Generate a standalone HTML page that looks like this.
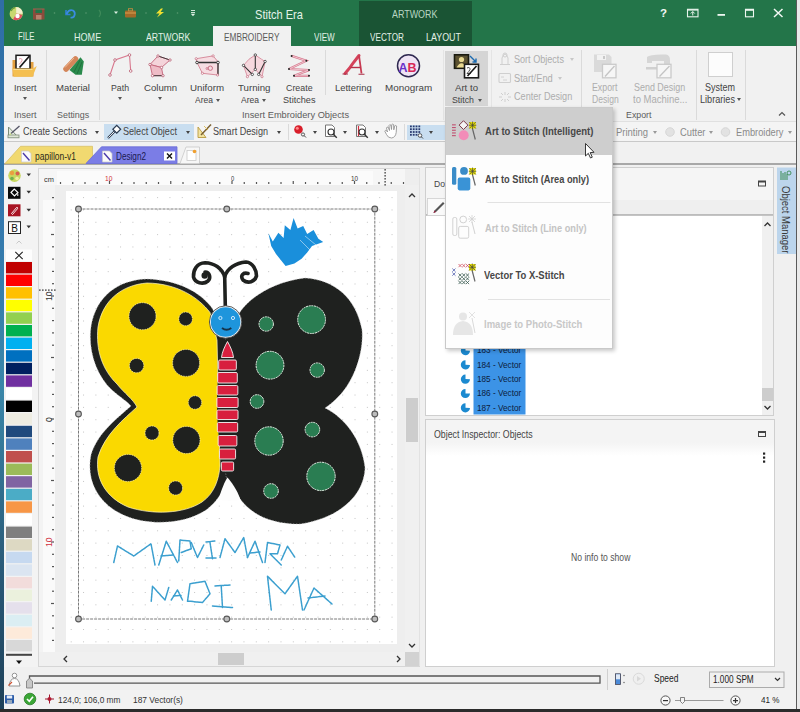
<!DOCTYPE html>
<html><head><meta charset="utf-8">
<style>
*{margin:0;padding:0;box-sizing:border-box}
html,body{width:800px;height:712px;overflow:hidden;background:#f0f0f0;font-family:"Liberation Sans",sans-serif;color:#444}
.a{position:absolute}
.t{position:absolute;white-space:nowrap;line-height:1}
.arr{position:absolute;width:0;height:0;border-left:2.5px solid transparent;border-right:2.5px solid transparent;border-top:3px solid #555}
svg{position:absolute;overflow:visible}
</style></head><body>
<div class="a" style="left:0px;top:0px;width:4px;height:712px;background:linear-gradient(#2f6ea6,#3478ae 30%,#3a86a8 55%,#2a5a78 80%,#1e4058);"></div>
<div class="a" style="left:797px;top:0px;width:3px;height:712px;background:#eaeaea;"></div>
<div class="a" style="left:796px;top:0px;width:1px;height:712px;background:#5a5a5a;"></div>
<div class="a" style="left:0px;top:709px;width:800px;height:3px;background:#2b2b2b;"></div>
<div class="a" style="left:4px;top:0px;width:792px;height:46px;background:#237549;"></div>
<div class="a" style="left:359px;top:1px;width:113px;height:45px;background:#1a5434;"></div>
<div class="t" style="left:254.50px;top:8.00px;font-size:13.41px;color:#e6f3ea;transform:scaleX(0.8250);transform-origin:0 0;">Stitch Era</div>
<div class="t" style="left:392.00px;top:9.00px;font-size:10.87px;color:#b9d6c3;transform:scaleX(0.8216);transform-origin:0 0;">ARTWORK</div>
<div class="t" style="left:17.50px;top:32.00px;font-size:10.14px;color:#e2f1e7;transform:scaleX(0.7708);transform-origin:0 0;">FILE</div>
<div class="t" style="left:73.75px;top:33.00px;font-size:10.14px;color:#e2f1e7;transform:scaleX(0.8954);transform-origin:0 0;">HOME</div>
<div class="t" style="left:146.00px;top:33.00px;font-size:10.14px;color:#e2f1e7;transform:scaleX(0.8609);transform-origin:0 0;">ARTWORK</div>
<div class="a" style="left:213px;top:26px;width:78px;height:20px;background:#f1f1f1;"></div>
<div class="t" style="left:224.00px;top:33.00px;font-size:10.14px;color:#5a5a5a;transform:scaleX(0.8159);transform-origin:0 0;">EMBROIDERY</div>
<div class="t" style="left:313.75px;top:33.00px;font-size:10.14px;color:#e2f1e7;transform:scaleX(0.8005);transform-origin:0 0;">VIEW</div>
<div class="t" style="left:370.00px;top:33.00px;font-size:10.14px;color:#e2f1e7;transform:scaleX(0.8076);transform-origin:0 0;">VECTOR</div>
<div class="t" style="left:425.75px;top:33.00px;font-size:10.14px;color:#e2f1e7;transform:scaleX(0.8790);transform-origin:0 0;">LAYOUT</div>
<div class="a" style="left:4px;top:46px;width:792px;height:76px;background:#f1f1f1;"></div>
<div class="a" style="left:4px;top:121px;width:792px;height:1px;background:#e0e0e0;"></div>
<div class="t" style="left:13.50px;top:84.00px;font-size:9.28px;color:#444444;transform:scaleX(0.9703);transform-origin:0 0;">Insert</div>
<div class="arr" style="left:22.5px;top:96.5px;border-left-width:2.5px;border-right-width:2.5px;border-top-color:#555"></div>
<div class="t" style="left:13.50px;top:110.00px;font-size:9.42px;color:#5c5c5c;transform:scaleX(0.9554);transform-origin:0 0;">Insert</div>
<div class="a" style="left:46px;top:50px;width:1px;height:70px;background:#dadada;"></div>
<div class="t" style="left:56.00px;top:84.00px;font-size:9.28px;color:#444444;transform:scaleX(1.0311);transform-origin:0 0;">Material</div>
<div class="t" style="left:56.70px;top:110.00px;font-size:9.42px;color:#5c5c5c;transform:scaleX(0.9485);transform-origin:0 0;">Settings</div>
<div class="a" style="left:99px;top:50px;width:1px;height:70px;background:#dadada;"></div>
<div class="t" style="left:111.00px;top:84.00px;font-size:9.28px;color:#444444;transform:scaleX(0.9443);transform-origin:0 0;">Path</div>
<div class="arr" style="left:117.5px;top:96.5px;border-left-width:2.5px;border-right-width:2.5px;border-top-color:#555"></div>
<div class="t" style="left:143.80px;top:84.00px;font-size:9.28px;color:#444444;transform:scaleX(1.0390);transform-origin:0 0;">Column</div>
<div class="arr" style="left:157.5px;top:96.5px;border-left-width:2.5px;border-right-width:2.5px;border-top-color:#555"></div>
<div class="t" style="left:190.40px;top:84.00px;font-size:9.28px;color:#444444;transform:scaleX(1.0504);transform-origin:0 0;">Uniform</div>
<div class="t" style="left:194.60px;top:95.00px;font-size:9.57px;color:#444444;transform:scaleX(0.8848);transform-origin:0 0;">Area</div>
<div class="arr" style="left:215.5px;top:98.5px;border-left-width:2.5px;border-right-width:2.5px;border-top-color:#555"></div>
<div class="t" style="left:237.80px;top:84.00px;font-size:9.28px;color:#444444;transform:scaleX(1.0444);transform-origin:0 0;">Turning</div>
<div class="t" style="left:241.00px;top:95.00px;font-size:9.57px;color:#444444;transform:scaleX(0.8897);transform-origin:0 0;">Area</div>
<div class="arr" style="left:262.0px;top:98.5px;border-left-width:2.5px;border-right-width:2.5px;border-top-color:#555"></div>
<div class="t" style="left:286.00px;top:84.00px;font-size:9.28px;color:#444444;transform:scaleX(0.9559);transform-origin:0 0;">Create</div>
<div class="t" style="left:283.30px;top:95.00px;font-size:9.57px;color:#444444;transform:scaleX(0.9558);transform-origin:0 0;">Stitches</div>
<div class="t" style="left:242.40px;top:110.00px;font-size:9.42px;color:#5c5c5c;transform:scaleX(0.9844);transform-origin:0 0;">Insert Embroidery Objects</div>
<div class="a" style="left:324.6px;top:50px;width:1px;height:45px;background:#dadada;"></div>
<div class="t" style="left:335.00px;top:84.00px;font-size:9.28px;color:#444444;transform:scaleX(1.0172);transform-origin:0 0;">Lettering</div>
<div class="t" style="left:384.70px;top:84.00px;font-size:9.28px;color:#444444;transform:scaleX(1.0646);transform-origin:0 0;">Monogram</div>
<div class="a" style="left:443px;top:50px;width:1px;height:70px;background:#e4e4e4;"></div>
<div class="a" style="left:445px;top:51px;width:43px;height:55px;background:#d5d5d5;"></div>
<div class="t" style="left:454.70px;top:83.00px;font-size:9.71px;color:#444444;transform:scaleX(0.9911);transform-origin:0 0;">Art to</div>
<div class="t" style="left:452.00px;top:95.00px;font-size:9.86px;color:#444444;transform:scaleX(0.8929);transform-origin:0 0;">Stitch</div>
<div class="arr" style="left:477.5px;top:98.5px;border-left-width:2.5px;border-right-width:2.5px;border-top-color:#555"></div>
<div class="a" style="left:491px;top:50px;width:1px;height:70px;background:#e4e4e4;"></div>
<div class="t" style="left:513.75px;top:55.00px;font-size:10.14px;color:#adadad;transform:scaleX(0.8961);transform-origin:0 0;">Sort Objects</div>
<div class="arr" style="left:570.0px;top:57.5px;border-left-width:2.5px;border-right-width:2.5px;border-top-color:#c8c8c8"></div>
<div class="t" style="left:513.75px;top:73.00px;font-size:10.51px;color:#adadad;transform:scaleX(0.8844);transform-origin:0 0;">Start/End</div>
<div class="arr" style="left:557.5px;top:76.5px;border-left-width:2.5px;border-right-width:2.5px;border-top-color:#c8c8c8"></div>
<div class="t" style="left:513.75px;top:91.00px;font-size:10.58px;color:#adadad;transform:scaleX(0.8616);transform-origin:0 0;">Center Design</div>
<div class="a" style="left:581px;top:50px;width:1px;height:70px;background:#dadada;"></div>
<div class="t" style="left:592.00px;top:83.00px;font-size:10.14px;color:#adadad;transform:scaleX(0.8697);transform-origin:0 0;">Export</div>
<div class="t" style="left:592.00px;top:95.00px;font-size:10.14px;color:#adadad;transform:scaleX(0.8465);transform-origin:0 0;">Design</div>
<div class="t" style="left:633.75px;top:83.00px;font-size:10.14px;color:#adadad;transform:scaleX(0.8824);transform-origin:0 0;">Send Design</div>
<div class="t" style="left:632.50px;top:95.00px;font-size:10.14px;color:#adadad;transform:scaleX(0.9384);transform-origin:0 0;">to Machine...</div>
<div class="t" style="left:626.25px;top:110.00px;font-size:9.42px;color:#5c5c5c;transform:scaleX(0.9367);transform-origin:0 0;">Export</div>
<div class="a" style="left:696px;top:50px;width:1px;height:70px;background:#dadada;"></div>
<div class="a" style="left:708px;top:52px;width:25px;height:25px;background:#fcfcfc;border:1px solid #cfcfcf"></div>
<div class="t" style="left:705.00px;top:82.00px;font-size:11.30px;color:#444444;transform:scaleX(0.7958);transform-origin:0 0;">System</div>
<div class="t" style="left:700.00px;top:94.00px;font-size:10.87px;color:#444444;transform:scaleX(0.8396);transform-origin:0 0;">Libraries</div>
<div class="arr" style="left:736.5px;top:97.5px;border-left-width:2.5px;border-right-width:2.5px;border-top-color:#555"></div>
<div class="a" style="left:745px;top:50px;width:1px;height:70px;background:#dadada;"></div>
<svg class="a" style="left:0;top:0" width="800" height="712" viewBox="0 0 800 712"><circle cx="16.2" cy="13.7" r="6.6" fill="#c8d870"/><path d="M16.2 7.1 A6.6 6.6 0 0 1 22.8 13.7 L16.2 13.7 Z" fill="#f4f0d0"/><path d="M16.5 13.5 L22.5 15 A6.6 6.6 0 0 1 13 19.5 Z" fill="#e05060"/><circle cx="17.5" cy="16" r="2.2" fill="#fff"/><path d="M11 11 A6 6 0 0 1 15 7.5" stroke="#6aa040" stroke-width="1.5" fill="none"/><path d="M33 9 L33 19.5 L44.5 19.5 L44.5 9 L42 9 L42 13 L35.5 13 L35.5 9 Z" fill="#8a4c3c"/><rect x="36" y="15" width="5.5" height="4.5" fill="#b9826e"/><path d="M33 9 L44.5 9" stroke="#a76050" stroke-width="1"/><path d="M66 10 L66 14.5 L70.5 14.5" fill="none" stroke="#2f7fd6" stroke-width="1.6"/><path d="M66.5 14 Q69 9 73 10.5 Q76 12.5 74 16.5 Q72.5 18 70.5 17.5" fill="none" stroke="#3a8ce0" stroke-width="1.8"/><circle cx="54.5" cy="13" r="0.8" fill="#5a9a70"/><circle cx="86" cy="13" r="0.8" fill="#5a9a70"/><circle cx="146" cy="13" r="0.8" fill="#5a9a70"/><circle cx="177.5" cy="13" r="0.8" fill="#5a9a70"/><path d="M99 10 Q102 13 99 17" fill="none" stroke="#3f8a5a" stroke-width="1.2"/><path d="M114 11.5 L118 11.5 L116 14 Z" fill="#dff0e4"/><rect x="125" y="10.5" width="11" height="7" rx="1" fill="#a36a28"/><rect x="128.5" y="8.7" width="4" height="2.2" fill="none" stroke="#c08a40" stroke-width="0.9"/><rect x="125" y="12.5" width="11" height="1" fill="#d9a050"/><path d="M161 8.5 L156 13.5 L159.5 13.5 L157 17.5 L164 12 L160.5 12 L163 8.5 Z" fill="#f2e030"/><path d="M191 10.5 L195 10.5 M191 12.5 L195 12.5" stroke="#e0f0e6" stroke-width="0.9"/><path d="M190.8 13.8 L195.2 13.8 L193 16.3 Z" fill="#e0f0e6"/><text x="660" y="17.3" font-family="Liberation Sans" font-weight="bold" font-size="11.5" fill="#f2f8f4">?</text><rect x="687.5" y="9.3" width="10.5" height="7.5" fill="none" stroke="#e8f4ec" stroke-width="1.1"/><rect x="687.5" y="9.3" width="10.5" height="1.3" fill="#e8f4ec"/><path d="M692.75 15.5 L692.75 11.8 M690.8 13.5 L692.75 11.5 L694.7 13.5" fill="none" stroke="#e8f4ec" stroke-width="1"/><rect x="717.5" y="14" width="7.5" height="1.8" fill="#eef7f1"/><rect x="745.5" y="9.3" width="8" height="7.5" fill="none" stroke="#eef7f1" stroke-width="1.1"/><rect x="745.5" y="9" width="8" height="1.8" fill="#eef7f1"/><path d="M774 9 L782.5 17 M782.5 9 L774 17" stroke="#f2f8f4" stroke-width="1.5"/><path d="M12.5 60 L20 60 L22 62 L33.5 62 L33.5 76.5 L12.5 76.5 Z" fill="#e3a040"/><rect x="16" y="55.3" width="14" height="13.7" fill="#fff" stroke="#1a1a1a" stroke-width="1.5"/><path d="M19 59 q3 -1.5 3 1.5 q-1 2 -3 4" fill="none" stroke="#e89aa8" stroke-width="1"/><path d="M29.5 56 L19.5 67.5" stroke="#1a1a1a" stroke-width="1.8"/><path d="M12.3 68.5 L33 68.5 L36.8 66 L32.5 76.8 L13.8 76.8 Z" fill="#f4bf50"/><path d="M13.5 69.5 L32.5 69.5" stroke="#f9dc90" stroke-width="1"/><path d="M66 69 L75.5 59" stroke="#d4865a" stroke-width="5.5" stroke-linecap="round"/><path d="M65 67.5 L74 58" stroke="#f0b890" stroke-width="1"/><path d="M69.5 70 L80.5 57.3 L83.8 61.5 L81.8 74.8 L75.5 74.8 Z" fill="#2a8a4c"/><path d="M74 72 L80 60 M77 74 L82 62" stroke="#1d6b3a" stroke-width="0.8"/><polyline points="110,75 115,60 129.5,55 130.7,71" fill="none" stroke="#d8788e" stroke-width="1.1"/><circle cx="110" cy="75" r="1.3" fill="#fff" stroke="#b85c70" stroke-width="0.8"/><circle cx="115" cy="60" r="1.3" fill="#fff" stroke="#b85c70" stroke-width="0.8"/><circle cx="129.5" cy="55" r="1.3" fill="#fff" stroke="#b85c70" stroke-width="0.8"/><circle cx="130.7" cy="71" r="1.3" fill="#fff" stroke="#b85c70" stroke-width="0.8"/><path d="M158 56 L170 60 L161.5 67.5 L150 64.5 Z" fill="#f4d4da" stroke="#c4647a" stroke-width="0.9"/><path d="M150 64.5 L161.5 67.5 L163 75.7 L152.5 75.7 Z" fill="#eebcc6" stroke="#c4647a" stroke-width="0.9"/><path d="M158 56 L170 60 M152.5 75.7 L163 75.7" stroke="#333" stroke-width="0.9"/><circle cx="158" cy="56" r="1.2" fill="#fff" stroke="#b85c70" stroke-width="0.8"/><circle cx="170" cy="60" r="1.2" fill="#fff" stroke="#b85c70" stroke-width="0.8"/><circle cx="161.5" cy="67.5" r="1.2" fill="#fff" stroke="#b85c70" stroke-width="0.8"/><circle cx="150" cy="64.5" r="1.2" fill="#fff" stroke="#b85c70" stroke-width="0.8"/><circle cx="152.5" cy="75.7" r="1.2" fill="#fff" stroke="#b85c70" stroke-width="0.8"/><circle cx="163" cy="75.7" r="1.2" fill="#fff" stroke="#b85c70" stroke-width="0.8"/><path d="M196.2 58.7 L213.1 55.9 L218.2 62 L217.6 75 L202.4 73.3 L196.8 62 Z" fill="#f6dde2" stroke="#d48294" stroke-width="0.9"/><path d="M197 62.5 L218 62.5 L218 75" fill="none" stroke="#333" stroke-width="1.3"/><circle cx="210.3" cy="68.2" r="2.2" fill="none" stroke="#c4647a" stroke-width="0.9"/><circle cx="207" cy="68.5" r="1" fill="none" stroke="#c4647a" stroke-width="0.7"/><circle cx="197" cy="62.5" r="1.3" fill="#fff" stroke="#333" stroke-width="0.9"/><circle cx="218" cy="62.5" r="1.3" fill="#fff" stroke="#333" stroke-width="0.9"/><circle cx="196.2" cy="58.7" r="1.1" fill="#fff" stroke="#c4647a" stroke-width="0.7"/><circle cx="213.1" cy="55.9" r="1.1" fill="#fff" stroke="#c4647a" stroke-width="0.7"/><circle cx="217.6" cy="75" r="1.1" fill="#fff" stroke="#c4647a" stroke-width="0.7"/><circle cx="202.4" cy="73.3" r="1.1" fill="#fff" stroke="#c4647a" stroke-width="0.7"/><path d="M249 59.2 L255.3 55 L261.5 59.2 L265.1 61.5 L262 76.7 L255.3 69.4 L247.4 76.7 L243.5 65.4 Z" fill="#f6d8de" stroke="#d48294" stroke-width="0.8"/><path d="M255.3 55 L255.3 69.4 M243.5 65.4 L252.3 74.4 M265.1 61.5 L258.7 74.4" stroke="#333" stroke-width="1.1"/><circle cx="255.3" cy="55" r="1.2" fill="#fff" stroke="#333" stroke-width="0.8"/><circle cx="243.5" cy="65.4" r="1.2" fill="#fff" stroke="#333" stroke-width="0.8"/><circle cx="252.3" cy="74.4" r="1.2" fill="#fff" stroke="#333" stroke-width="0.8"/><circle cx="255.3" cy="69.4" r="1.2" fill="#fff" stroke="#333" stroke-width="0.8"/><circle cx="258.7" cy="74.4" r="1.2" fill="#fff" stroke="#333" stroke-width="0.8"/><circle cx="265.1" cy="61.5" r="1.2" fill="#fff" stroke="#333" stroke-width="0.8"/><circle cx="247.4" cy="76.7" r="1.1" fill="#fff" stroke="#c4647a" stroke-width="0.7"/><circle cx="262" cy="76.7" r="1.1" fill="#fff" stroke="#c4647a" stroke-width="0.7"/><polyline points="291.6,55.9 306.3,60.8 289,69 309,70.1 294,75.8 309,75.8" fill="none" stroke="#d8788e" stroke-width="2.2"/><polyline points="291.6,55.9 306.3,60.8 289,69 309,70.1 294,75.8 309,75.8" fill="none" stroke="#f7e4e8" stroke-width="0.7"/><circle cx="291.6" cy="55.9" r="1" fill="#222"/><circle cx="306.3" cy="60.8" r="1" fill="#222"/><circle cx="289" cy="69" r="1" fill="#222"/><circle cx="309" cy="70.1" r="1" fill="#222"/><circle cx="294" cy="75.8" r="1" fill="#222"/><circle cx="309" cy="75.8" r="1" fill="#222"/><path d="M345 73.5 Q350 68 353.5 62.5 L359 55.5" fill="none" stroke="#d4425a" stroke-width="3" stroke-linecap="round"/><path d="M359 55.5 L361.5 73.5" fill="none" stroke="#c83a52" stroke-width="1.8"/><path d="M342.5 74 L348 74 M358.5 74.2 L364.5 74.2" stroke="#a83048" stroke-width="1.1"/><path d="M350.5 67.5 L360.5 67.5" stroke="#b83048" stroke-width="1.4"/><circle cx="408.5" cy="65.8" r="11" fill="#eee4f4" stroke="#2e2850" stroke-width="1.5"/><text x="398.6" y="72" font-family="Liberation Sans" font-weight="bold" font-size="12.5" fill="#6a30c8" transform="scale(1 1)">A</text><text x="407.4" y="72" font-family="Liberation Sans" font-weight="bold" font-size="12.5" fill="#d82858">B</text><rect x="454.5" y="54.8" width="14" height="13.5" fill="#5a5030" stroke="#1a1a10" stroke-width="1.6"/><circle cx="461.5" cy="59.5" r="2.6" fill="#e8d890"/><path d="M456.5 67.5 Q461.5 59 466.5 67.5 Z" fill="#e8d890"/><path d="M470 56 L476 62 M476 58.5 L476 62 L472.5 62" fill="none" stroke="#1a6ab0" stroke-width="1.4"/><rect x="464.5" y="64.3" width="14" height="13.5" fill="#fff" stroke="#1a1a1a" stroke-width="1.6"/><path d="M476.5 66 L467.5 76" stroke="#1a1a1a" stroke-width="1.6"/><path d="M467 68 q3 -1.5 3 1.5 q-1 2 -3 4 l4 0" fill="none" stroke="#222" stroke-width="0.8"/><path d="M502 64 L502 58 Q505 50 508 58 L508 64 M500 64.5 L510 64.5" fill="none" stroke="#cfcfcf" stroke-width="1"/><circle cx="505" cy="55" r="2" fill="none" stroke="#cfcfcf" stroke-width="1"/><rect x="499" y="73.5" width="11.5" height="9" rx="1" fill="none" stroke="#cfcfcf" stroke-width="1.1"/><path d="M501 77 L504 77 M503 80 L507 80" stroke="#cfcfcf" stroke-width="0.9"/><path d="M505 92 L505 95 M505 99 L505 102 M499 97 L502 97 M508 97 L511 97 M501 93 L503 95 M507 99 L509 101 M501 101 L503 99 M507 95 L509 93" stroke="#cfcfcf" stroke-width="1"/><path d="M594 54.5 L609 54.5 L611.5 57 L611.5 72 L594 72 Z" fill="#dadada"/><rect x="597" y="55" width="9" height="5" fill="#f2f2f2"/><rect x="603" y="56" width="2" height="3" fill="#c8c8c8"/><rect x="602.5" y="64.3" width="13.5" height="13.5" fill="#f6f6f6" stroke="#cacaca" stroke-width="1.3"/><path d="M614.5 66 L605 76.5" stroke="#c4c4c4" stroke-width="1.3"/><path d="M647 57 Q650 54 666 54.5 Q670 55 670 60 L670 68 L664 68 L664 61 L652 61 L652 63 L647 63 Z" fill="#d6d6d6"/><rect x="646" y="67" width="14" height="2.5" fill="#d0d0d0"/><rect x="657" y="64.3" width="14" height="13.5" fill="#f6f6f6" stroke="#cacaca" stroke-width="1.3"/><path d="M669.5 66 L659.5 76.5" stroke="#c4c4c4" stroke-width="1.3"/><path d="M779 115.5 L782 112.5 L785 115.5" fill="none" stroke="#555" stroke-width="1.2"/></svg>
<div class="a" style="left:4px;top:122px;width:792px;height:19px;background:#f4f4f4;"></div>
<div class="a" style="left:4px;top:141px;width:792px;height:1px;background:#c9c9c9;"></div>
<div class="t" style="left:23.00px;top:127.00px;font-size:10.43px;color:#444444;transform:scaleX(0.8620);transform-origin:0 0;">Create Sections</div>
<div class="arr" style="left:95.0px;top:130.5px;border-left-width:2.5px;border-right-width:2.5px;border-top-color:#444"></div>
<div class="a" style="left:104px;top:124px;width:90px;height:16px;background:#c9def0;"></div>
<div class="t" style="left:123.00px;top:127.00px;font-size:10.43px;color:#444444;transform:scaleX(0.8705);transform-origin:0 0;">Select Object</div>
<div class="arr" style="left:185.5px;top:130.5px;border-left-width:2.5px;border-right-width:2.5px;border-top-color:#444"></div>
<div class="t" style="left:213.00px;top:127.00px;font-size:10.00px;color:#444444;transform:scaleX(0.9076);transform-origin:0 0;">Smart Design</div>
<div class="arr" style="left:276.5px;top:130.5px;border-left-width:2.5px;border-right-width:2.5px;border-top-color:#444"></div>
<div class="a" style="left:287.5px;top:124px;width:1px;height:16px;background:#dadada;"></div>
<div class="arr" style="left:312.5px;top:130.5px;border-left-width:2.5px;border-right-width:2.5px;border-top-color:#444"></div>
<div class="arr" style="left:343.0px;top:130.5px;border-left-width:2.5px;border-right-width:2.5px;border-top-color:#444"></div>
<div class="arr" style="left:374.5px;top:130.5px;border-left-width:2.5px;border-right-width:2.5px;border-top-color:#444"></div>
<div class="a" style="left:404px;top:124px;width:1px;height:16px;background:#dadada;"></div>
<div class="a" style="left:407px;top:124.5px;width:38px;height:15.5px;background:#c9def0;"></div>
<div class="arr" style="left:428.5px;top:130.5px;border-left-width:2.5px;border-right-width:2.5px;border-top-color:#444"></div>
<div class="t" style="left:616.00px;top:127.00px;font-size:10.58px;color:#8a8a8a;transform:scaleX(0.8922);transform-origin:0 0;">Printing</div>
<div class="arr" style="left:653.0px;top:130.5px;border-left-width:2.5px;border-right-width:2.5px;border-top-color:#999"></div>
<div class="t" style="left:679.50px;top:127.00px;font-size:10.58px;color:#8a8a8a;transform:scaleX(0.8845);transform-origin:0 0;">Cutter</div>
<div class="arr" style="left:709.25px;top:130.5px;border-left-width:2.5px;border-right-width:2.5px;border-top-color:#999"></div>
<div class="t" style="left:735.50px;top:127.00px;font-size:10.58px;color:#8a8a8a;transform:scaleX(0.8778);transform-origin:0 0;">Embroidery</div>
<div class="arr" style="left:787.5px;top:130.5px;border-left-width:2.5px;border-right-width:2.5px;border-top-color:#999"></div>
<div class="a" style="left:4px;top:142px;width:792px;height:23px;background:#f1f1f1;"></div>
<div class="a" style="left:4px;top:163px;width:792px;height:1.5px;background:#a8a8a8;"></div>
<svg class="a" style="left:0;top:0" width="800" height="712" viewBox="0 0 800 712"><path d="M8.5 127 L8.5 137 L18 137 Z" fill="#e4ebe0" stroke="#7d8c78" stroke-width="1"/><rect x="8" y="135" width="11" height="2.8" fill="#dfe7d6" stroke="#7d8c78" stroke-width="0.8"/><path d="M11 133.5 L19.5 126" stroke="#556" stroke-width="1.3"/><path d="M11 133.5 L10 135" stroke="#c9e080" stroke-width="1.2"/><path d="M108 138 L115 131" stroke="#2a3a50" stroke-width="2.3"/><path d="M108.3 137.7 L114.7 131.3" stroke="#fff" stroke-width="0.9"/><rect x="114" y="126.5" width="5.5" height="5.5" fill="#fff" stroke="#2a3a50" stroke-width="1.2" transform="rotate(45 116.75 129.25)"/><path d="M198 127 L198 137.5 L206 137.5 Z" fill="#f3e3a0" stroke="#b89a40" stroke-width="0.9"/><path d="M201 135 L211 124.5" stroke="#7a6030" stroke-width="1.5"/><path d="M204 126 L208 130" stroke="#e0c060" stroke-width="1"/><circle cx="298.5" cy="129.5" r="4.3" fill="#d81e2a"/><circle cx="297.3" cy="128.2" r="1.5" fill="#f88"/><circle cx="303" cy="134.5" r="1.6" fill="none" stroke="#333" stroke-width="0.8"/><path d="M304.2 135.7 L306 137.5" stroke="#333" stroke-width="0.9"/><path d="M325.5 125 L332 125 L334.5 127.5 L334.5 136.5 L325.5 136.5 Z" fill="#fff" stroke="#777" stroke-width="1"/><circle cx="331" cy="132" r="3" fill="#fff" stroke="#333" stroke-width="1.1"/><path d="M333.2 134.2 L336.8 137.8" stroke="#333" stroke-width="1.4"/><path d="M356.5 125 L363 125 L365.5 127.5 L365.5 136.5 L356.5 136.5 Z" fill="#fff" stroke="#777" stroke-width="1"/><path d="M358.5 126 L358.5 136" stroke="#d03040" stroke-width="1.2"/><circle cx="362" cy="132" r="3" fill="#fff" stroke="#333" stroke-width="1.1"/><path d="M364.2 134.2 L367.8 137.8" stroke="#333" stroke-width="1.4"/><path d="M387.5 132 L386.5 128 Q386.8 126.6 388.2 127.2 L389.5 130.5 L389 125.5 Q389.5 124.2 390.8 125 L391.5 129.5 L391.8 124.6 Q392.6 123.6 393.6 124.6 L393.8 129.8 L394.8 125.8 Q395.8 125 396.6 126 L396.2 132.5 Q395.5 137.5 391.5 138 Q388 138 386.5 134.5 L384.8 131.2 Q385.2 129.8 386.6 130.6 Z" fill="#fff" stroke="#8a8a8a" stroke-width="0.8"/><rect x="410.0" y="125.5" width="1.8" height="1.8" fill="#2a3a70"/><rect x="410.0" y="128.3" width="1.8" height="1.8" fill="#2a3a70"/><rect x="410.0" y="131.1" width="1.8" height="1.8" fill="#2a3a70"/><rect x="410.0" y="133.9" width="1.8" height="1.8" fill="#2a3a70"/><rect x="412.8" y="125.5" width="1.8" height="1.8" fill="#2a3a70"/><rect x="412.8" y="128.3" width="1.8" height="1.8" fill="#2a3a70"/><rect x="412.8" y="131.1" width="1.8" height="1.8" fill="#2a3a70"/><rect x="412.8" y="133.9" width="1.8" height="1.8" fill="#2a3a70"/><rect x="415.6" y="125.5" width="1.8" height="1.8" fill="#2a3a70"/><rect x="415.6" y="128.3" width="1.8" height="1.8" fill="#2a3a70"/><rect x="415.6" y="131.1" width="1.8" height="1.8" fill="#2a3a70"/><rect x="415.6" y="133.9" width="1.8" height="1.8" fill="#2a3a70"/><rect x="418.4" y="125.5" width="1.8" height="1.8" fill="#2a3a70"/><rect x="418.4" y="128.3" width="1.8" height="1.8" fill="#2a3a70"/><rect x="418.4" y="131.1" width="1.8" height="1.8" fill="#2a3a70"/><circle cx="420" cy="135.5" r="1.8" fill="#fff" stroke="#333" stroke-width="0.8"/><path d="M421.3 136.8 L423 138.5" stroke="#333" stroke-width="0.9"/><circle cx="670" cy="132" r="4.3" fill="#e2e2e2" stroke="#d0d0d0" stroke-width="0.8"/><circle cx="725.5" cy="132" r="4.3" fill="#e2e2e2" stroke="#d0d0d0" stroke-width="0.8"/><path d="M5 163.5 L20.5 146.3 L92.5 146.3 L92.5 156 L86 163.5 Z" fill="#f1d970" stroke="#d9c267" stroke-width="0.8"/><path d="M86 163.5 L101.5 146.8 L177 146.8 L177 163.5 Z" fill="#7b7de6" stroke="#6a6cd8" stroke-width="0.8"/><path d="M21.5 151 L28.5 151 L31.0 153.5 L31.0 162 L21.5 162 Z" fill="#fbfbfb" stroke="#c9c9c9" stroke-width="0.7"/><path d="M23.0 153 L29.5 160.5" stroke="#4a3aa8" stroke-width="1.4"/><path d="M102.5 151 L109.5 151 L112.0 153.5 L112.0 162 L102.5 162 Z" fill="#fbfbfb" stroke="#c9c9c9" stroke-width="0.7"/><path d="M104.0 153 L110.5 160.5" stroke="#4a3aa8" stroke-width="1.4"/><rect x="164" y="151.5" width="11" height="9" fill="#fff"/><path d="M167 153.5 L172 158.5 M172 153.5 L167 158.5" stroke="#111" stroke-width="1.4"/><path d="M180 163.5 L186 147 L199.5 147 L199.5 163.5" fill="#f7f7f7" stroke="#c8c8c8" stroke-width="0.8"/><rect x="187" y="150.5" width="9" height="10" fill="#fff" stroke="#c9c9c9" stroke-width="0.8"/><circle cx="194.5" cy="151.5" r="1.8" fill="#f0a030"/></svg>
<div class="t" style="left:35.00px;top:151.00px;font-size:10.58px;color:#2a2a1a;transform:scaleX(0.8015);transform-origin:0 0;">papillon-v1</div>
<div class="t" style="left:116.00px;top:151.00px;font-size:10.58px;color:#1a1a50;transform:scaleX(0.7726);transform-origin:0 0;">Design2</div>
<div class="a" style="left:4px;top:165px;width:792px;height:544px;background:#f0f0f0;"></div>
<svg class="a" style="left:0;top:0" width="800" height="712" viewBox="0 0 800 712"><rect x="4" y="165" width="34" height="544" fill="#f3f3f3"/><circle cx="14.5" cy="175.6" r="6.3" fill="#c8d860"/><circle cx="12" cy="173" r="2.2" fill="#e9a040"/><circle cx="17.5" cy="173.5" r="2" fill="#d86050"/><circle cx="17" cy="178.5" r="1.8" fill="#f0f0a0"/><circle cx="12" cy="178.5" r="1.8" fill="#70b050"/><rect x="8" y="186.8" width="12.5" height="12" fill="#0a0a0a"/><path d="M11 192.5 L14.3 189 L18 192.5 L14.5 196 Z" fill="none" stroke="#fff" stroke-width="1.1"/><path d="M17.8 193.5 L17.8 196" stroke="#fff" stroke-width="1"/><rect x="8" y="204.3" width="12.5" height="12" fill="#a81423"/><path d="M11.5 213.5 L16.5 207.5 Q18 207 17.5 208.7 L12.5 214.5 Z" fill="none" stroke="#fff" stroke-width="0.9"/><rect x="8.5" y="221.7" width="12" height="11.8" fill="#fff" stroke="#222" stroke-width="1"/><text x="11.2" y="231.5" font-family="Liberation Sans" font-size="10" fill="#111">B</text><path d="M26.5 173.5 L31 173.5 L28.75 176.3 Z" fill="#333"/><path d="M26.5 190.7 L31 190.7 L28.75 193.5 Z" fill="#333"/><path d="M26.5 208.7 L31 208.7 L28.75 211.5 Z" fill="#333"/><path d="M26.5 225.5 L31 225.5 L28.75 228.3 Z" fill="#333"/><path d="M16.5 243.5 L19 241 L21.5 243.5" fill="none" stroke="#c8c8c8" stroke-width="1"/><rect x="6" y="249.5" width="26" height="11.5" fill="#fdfdfd"/><path d="M15.3 251.8 L22.7 259.2 M22.7 251.8 L15.3 259.2" stroke="#222" stroke-width="1.1"/><rect x="6" y="262.00" width="26" height="11.4" fill="#c00000"/><rect x="6" y="274.60" width="26" height="11.4" fill="#ff0000"/><rect x="6" y="287.20" width="26" height="11.4" fill="#ffc000"/><rect x="6" y="299.80" width="26" height="11.4" fill="#ffff00"/><rect x="6" y="312.40" width="26" height="11.4" fill="#92d050"/><rect x="6" y="325.00" width="26" height="11.4" fill="#00b050"/><rect x="6" y="337.60" width="26" height="11.4" fill="#00b0f0"/><rect x="6" y="350.20" width="26" height="11.4" fill="#0070c0"/><rect x="6" y="362.80" width="26" height="11.4" fill="#002060"/><rect x="6" y="375.40" width="26" height="11.4" fill="#7030a0"/><rect x="6" y="388.00" width="26" height="11.4" fill="#ffffff"/><rect x="6" y="400.60" width="26" height="11.4" fill="#000000"/><rect x="6" y="413.20" width="26" height="11.4" fill="#eeece1"/><rect x="6" y="425.80" width="26" height="11.4" fill="#1f497d"/><rect x="6" y="438.40" width="26" height="11.4" fill="#4f81bd"/><rect x="6" y="451.00" width="26" height="11.4" fill="#c0504d"/><rect x="6" y="463.60" width="26" height="11.4" fill="#9bbb59"/><rect x="6" y="476.20" width="26" height="11.4" fill="#8064a2"/><rect x="6" y="488.80" width="26" height="11.4" fill="#4bacc6"/><rect x="6" y="501.40" width="26" height="11.4" fill="#f79646"/><rect x="6" y="514.00" width="26" height="11.4" fill="#ffffff"/><rect x="6" y="526.60" width="26" height="11.4" fill="#7f7f7f"/><rect x="6" y="539.20" width="26" height="11.4" fill="#ddd9c3"/><rect x="6" y="551.80" width="26" height="11.4" fill="#c6d9f0"/><rect x="6" y="564.40" width="26" height="11.4" fill="#dbe5f1"/><rect x="6" y="577.00" width="26" height="11.4" fill="#f2dcdb"/><rect x="6" y="589.60" width="26" height="11.4" fill="#ebf1dd"/><rect x="6" y="602.20" width="26" height="11.4" fill="#e5e0ec"/><rect x="6" y="614.80" width="26" height="11.4" fill="#dbeef3"/><rect x="6" y="627.40" width="26" height="11.4" fill="#fdeada"/><rect x="6" y="640.00" width="26" height="11.4" fill="#d8d8d8"/><rect x="6" y="653.8" width="26" height="2" fill="#444"/><path d="M16 660.5 L22 660.5 L19 664 Z" fill="#111"/><rect x="38.5" y="168.5" width="381.5" height="498" fill="#eeeeee" stroke="#d6d6d6" stroke-width="1"/><rect x="39" y="169" width="366" height="16" fill="#f6f6f6"/><rect x="57" y="171" width="316" height="14" fill="#fbfbfb"/><rect x="39" y="185" width="16" height="467" fill="#f3f3f3"/><rect x="43" y="200" width="12" height="452" fill="#fafafa"/><rect x="55" y="185" width="350" height="467" fill="#eeeeee"/><rect x="66" y="191" width="331" height="453" fill="#ffffff"/><rect x="59.90" y="182" width="1.2" height="2" fill="#555"/><rect x="72.15" y="182" width="1.2" height="2" fill="#555"/><rect x="84.40" y="182" width="1.2" height="2" fill="#555"/><rect x="96.65" y="182" width="1.2" height="2" fill="#555"/><rect x="108.90" y="181" width="1.2" height="3" fill="#555"/><rect x="121.15" y="182" width="1.2" height="2" fill="#555"/><rect x="133.40" y="182" width="1.2" height="2" fill="#555"/><rect x="145.65" y="182" width="1.2" height="2" fill="#555"/><rect x="157.90" y="182" width="1.2" height="2" fill="#555"/><rect x="170.15" y="181" width="1.2" height="3" fill="#555"/><rect x="182.40" y="182" width="1.2" height="2" fill="#555"/><rect x="194.65" y="182" width="1.2" height="2" fill="#555"/><rect x="206.90" y="182" width="1.2" height="2" fill="#555"/><rect x="219.15" y="182" width="1.2" height="2" fill="#555"/><rect x="231.40" y="181" width="1.2" height="3" fill="#555"/><rect x="243.65" y="182" width="1.2" height="2" fill="#555"/><rect x="255.90" y="182" width="1.2" height="2" fill="#555"/><rect x="268.15" y="182" width="1.2" height="2" fill="#555"/><rect x="280.40" y="182" width="1.2" height="2" fill="#555"/><rect x="292.65" y="181" width="1.2" height="3" fill="#555"/><rect x="304.90" y="182" width="1.2" height="2" fill="#555"/><rect x="317.15" y="182" width="1.2" height="2" fill="#555"/><rect x="329.40" y="182" width="1.2" height="2" fill="#555"/><rect x="341.65" y="182" width="1.2" height="2" fill="#555"/><rect x="353.90" y="181" width="1.2" height="3" fill="#555"/><rect x="366.15" y="182" width="1.2" height="2" fill="#555"/><rect x="378.40" y="182" width="1.2" height="2" fill="#555"/><rect x="390.65" y="182" width="1.2" height="2" fill="#555"/><rect x="402.90" y="182" width="1.2" height="2" fill="#555"/><rect x="52" y="197.00" width="2" height="1.2" fill="#555"/><rect x="52" y="209.30" width="2" height="1.2" fill="#555"/><rect x="52" y="221.60" width="2" height="1.2" fill="#555"/><rect x="51" y="233.90" width="3" height="1.2" fill="#555"/><rect x="52" y="246.20" width="2" height="1.2" fill="#555"/><rect x="52" y="258.50" width="2" height="1.2" fill="#555"/><rect x="52" y="270.80" width="2" height="1.2" fill="#555"/><rect x="52" y="283.10" width="2" height="1.2" fill="#555"/><rect x="51" y="295.40" width="3" height="1.2" fill="#555"/><rect x="52" y="307.70" width="2" height="1.2" fill="#555"/><rect x="52" y="320.00" width="2" height="1.2" fill="#555"/><rect x="52" y="332.30" width="2" height="1.2" fill="#555"/><rect x="52" y="344.60" width="2" height="1.2" fill="#555"/><rect x="51" y="356.90" width="3" height="1.2" fill="#555"/><rect x="52" y="369.20" width="2" height="1.2" fill="#555"/><rect x="52" y="381.50" width="2" height="1.2" fill="#555"/><rect x="52" y="393.80" width="2" height="1.2" fill="#555"/><rect x="52" y="406.10" width="2" height="1.2" fill="#555"/><rect x="51" y="418.40" width="3" height="1.2" fill="#555"/><rect x="52" y="430.70" width="2" height="1.2" fill="#555"/><rect x="52" y="443.00" width="2" height="1.2" fill="#555"/><rect x="52" y="455.30" width="2" height="1.2" fill="#555"/><rect x="52" y="467.60" width="2" height="1.2" fill="#555"/><rect x="51" y="479.90" width="3" height="1.2" fill="#555"/><rect x="52" y="492.20" width="2" height="1.2" fill="#555"/><rect x="52" y="504.50" width="2" height="1.2" fill="#555"/><rect x="52" y="516.80" width="2" height="1.2" fill="#555"/><rect x="52" y="529.10" width="2" height="1.2" fill="#555"/><rect x="51" y="541.40" width="3" height="1.2" fill="#555"/><rect x="52" y="553.70" width="2" height="1.2" fill="#555"/><rect x="52" y="566.00" width="2" height="1.2" fill="#555"/><rect x="52" y="578.30" width="2" height="1.2" fill="#555"/><rect x="52" y="590.60" width="2" height="1.2" fill="#555"/><rect x="51" y="602.90" width="3" height="1.2" fill="#555"/><rect x="52" y="615.20" width="2" height="1.2" fill="#555"/><rect x="52" y="627.50" width="2" height="1.2" fill="#555"/><rect x="52" y="639.80" width="2" height="1.2" fill="#555"/><rect x="405" y="185" width="14" height="467" fill="#f0f0f0"/><path d="M409 197 L412 194 L415 197" fill="none" stroke="#333" stroke-width="1.3"/><path d="M409 644 L412 647 L415 644" fill="none" stroke="#333" stroke-width="1.3"/><rect x="406" y="398" width="12" height="44" fill="#cdcdcd"/><rect x="39" y="652" width="366" height="14" fill="#f0f0f0"/><path d="M67 656 L64 659 L67 662" fill="none" stroke="#333" stroke-width="1.3"/><path d="M397 656 L400 659 L397 662" fill="none" stroke="#333" stroke-width="1.3"/><rect x="218" y="653" width="26" height="12" fill="#cdcdcd"/><rect x="405" y="652" width="14" height="14" fill="#d2d2d2"/></svg>
<svg class="a" style="left:0;top:0" width="800" height="712" viewBox="0 0 800 712"><rect x="420" y="165" width="376" height="503" fill="#f0f0f0"/><rect x="425.5" y="167.5" width="348" height="248" fill="#fff" stroke="#cfcfcf" stroke-width="1"/><rect x="426" y="168" width="347" height="32" fill="#f5f5f5"/><rect x="426" y="200" width="347" height="15" fill="#efefef"/><rect x="426" y="214.5" width="347" height="1" fill="#8a8a8a"/><rect x="427.5" y="198.5" width="18" height="17" fill="#fafafa" stroke="#cfcfcf" stroke-width="0.8"/><path d="M434.5 210.5 L443 202 L444.5 203.5 L436 212 L433.5 213 Z" fill="#555"/><path d="M433.5 213 L434.5 210.5 L436 212 Z" fill="#a02040"/><rect x="758.5" y="181" width="7" height="5" fill="none" stroke="#444" stroke-width="1"/><rect x="758.5" y="181" width="7" height="1.5" fill="#444"/><rect x="762" y="216" width="11" height="199" fill="#f0f0f0"/><path d="M764.5 226 L767.5 223 L770.5 226" fill="none" stroke="#333" stroke-width="1.3"/><path d="M764.5 406 L767.5 409 L770.5 406" fill="none" stroke="#333" stroke-width="1.3"/><rect x="762" y="388" width="11" height="13" fill="#cdcdcd"/><rect x="473.5" y="343" width="52" height="71.5" fill="#3c93e6"/><path d="M465.5 346.0 A4.6 4.6 0 1 0 470 350.7 L465.5 350.5 Z" fill="#1c8ad0"/><path d="M465.5 360.3 A4.6 4.6 0 1 0 470 365.0 L465.5 364.8 Z" fill="#1c8ad0"/><path d="M465.5 374.6 A4.6 4.6 0 1 0 470 379.3 L465.5 379.1 Z" fill="#1c8ad0"/><path d="M465.5 388.9 A4.6 4.6 0 1 0 470 393.59999999999997 L465.5 393.4 Z" fill="#1c8ad0"/><path d="M465.5 403.2 A4.6 4.6 0 1 0 470 407.9 L465.5 407.7 Z" fill="#1c8ad0"/><rect x="425.5" y="419.5" width="349" height="247" fill="#fff" stroke="#cfcfcf" stroke-width="1"/><defs><linearGradient id="oih" x1="0" y1="0" x2="0" y2="1"><stop offset="0" stop-color="#f4f4f4"/><stop offset="0.62" stop-color="#f4f4f4"/><stop offset="1" stop-color="#ffffff"/></linearGradient></defs><rect x="426" y="420" width="348" height="36" fill="url(#oih)"/><rect x="758.5" y="431.5" width="7" height="5" fill="none" stroke="#444" stroke-width="1"/><rect x="758.5" y="431.5" width="7" height="1.5" fill="#444"/><rect x="763" y="452.5" width="2.2" height="2.2" fill="#222"/><rect x="763" y="456.5" width="2.2" height="2.2" fill="#222"/><rect x="763" y="460.5" width="2.2" height="2.2" fill="#222"/><rect x="777" y="167.5" width="19" height="86.5" fill="#bcd5ec"/><path d="M781 171 L781 180 M783 173 L783 180 M785 172 L785 180 M787 174 L787 180" stroke="#3a8a50" stroke-width="1"/><circle cx="789" cy="173" r="2" fill="none" stroke="#3a8a50" stroke-width="0.9"/><rect x="384.5" y="169" width="1.2" height="1.6" fill="#333"/><rect x="384.5" y="172" width="1.2" height="1.6" fill="#333"/><rect x="384.5" y="175" width="1.2" height="1.6" fill="#333"/><rect x="384.5" y="178" width="1.2" height="1.6" fill="#333"/><rect x="384.5" y="181" width="1.2" height="1.6" fill="#333"/><rect x="384.5" y="184" width="1.2" height="1.6" fill="#333"/><rect x="39" y="289.5" width="1.6" height="1.2" fill="#333"/><rect x="42" y="289.5" width="1.6" height="1.2" fill="#333"/><rect x="45" y="289.5" width="1.6" height="1.2" fill="#333"/><rect x="48" y="289.5" width="1.6" height="1.2" fill="#333"/><rect x="51" y="289.5" width="1.6" height="1.2" fill="#333"/><rect x="54" y="289.5" width="1.6" height="1.2" fill="#333"/><rect x="4" y="667" width="792" height="42" fill="#f0f0f0"/><rect x="4" y="690" width="792" height="19" fill="#f2f2f2"/><circle cx="14.5" cy="675.5" r="2.3" fill="#fff" stroke="#888" stroke-width="0.9"/><path d="M9 686 Q10 678.5 14.5 678.5 Q19 678.5 20 686 Z" fill="#fff" stroke="#888" stroke-width="0.9"/><path d="M8.5 685.5 L12 682" stroke="#d05030" stroke-width="1.1"/><path d="M29.5 680 L29.5 676 L600 676 L600 683.2 L34 683.2" fill="none" stroke="#555" stroke-width="1.3"/><path d="M26.5 681 L29.5 678.3 L32.5 681 L32.5 688 L26.5 688 Z" fill="#c8c8c8" stroke="#777" stroke-width="0.8"/><rect x="607" y="669" width="1" height="21" fill="#d0d0d0"/><rect x="615.5" y="673.8" width="5" height="10.6" fill="#4a8ad8" stroke="#445" stroke-width="0.8"/><rect x="616" y="674.3" width="4" height="5" fill="#dfe9f6"/><circle cx="624" cy="675.5" r="0.8" fill="#777"/><circle cx="624" cy="682.5" r="0.8" fill="#777"/><circle cx="638.75" cy="678.75" r="5.5" fill="#efefef" stroke="#dadada" stroke-width="1"/><path d="M637 676 L641 678.75 L637 681.5 Z" fill="#d8d8d8"/><rect x="709.5" y="672" width="74.5" height="15.5" fill="#f0f0f0" stroke="#ababab" stroke-width="1"/><path d="M775 678 L777.5 680.5 L780 678" fill="none" stroke="#333" stroke-width="1.2"/><rect x="5" y="695" width="9" height="8.5" rx="0.8" fill="#2c5ca8"/><rect x="6.8" y="695.5" width="5.4" height="3" fill="#e8eef8"/><rect x="7" y="700" width="5" height="3" fill="#9ab"/><circle cx="30" cy="699" r="5.8" fill="#3aa635" stroke="#2a7a28" stroke-width="0.8"/><path d="M27 699 L29.3 701.3 L33 696.8" fill="none" stroke="#fff" stroke-width="1.6"/><path d="M49.5 694.5 L49.5 703.5 M45 699 L54 699" stroke="#a01830" stroke-width="1"/><circle cx="49.5" cy="699" r="2" fill="#b01830"/><circle cx="665.5" cy="700.5" r="4.6" fill="#f8f8f8" stroke="#555" stroke-width="1"/><rect x="663" y="700" width="5" height="1.2" fill="#333"/><rect x="675" y="700" width="48.5" height="1" fill="#999"/><path d="M680.5 697.5 L684.5 697.5 L684.5 701.5 L682.5 703.5 L680.5 701.5 Z" fill="#f4f4f4" stroke="#666" stroke-width="0.8"/><circle cx="735.5" cy="700.5" r="4.6" fill="#f8f8f8" stroke="#555" stroke-width="1"/><path d="M733 700.6 L738 700.6 M735.5 698 L735.5 703" stroke="#333" stroke-width="1.2"/></svg>
<svg class="a" style="left:0;top:0" width="800" height="712" viewBox="0 0 800 712"><rect x="70.70" y="197.10" width="1" height="1" fill="#c4c4c4"/><rect x="83.04" y="197.10" width="1" height="1" fill="#c4c4c4"/><rect x="95.38" y="197.10" width="1" height="1" fill="#c4c4c4"/><rect x="107.72" y="197.10" width="1" height="1" fill="#c4c4c4"/><rect x="120.06" y="197.10" width="1" height="1" fill="#c4c4c4"/><rect x="132.40" y="197.10" width="1" height="1" fill="#c4c4c4"/><rect x="144.74" y="197.10" width="1" height="1" fill="#c4c4c4"/><rect x="157.08" y="197.10" width="1" height="1" fill="#c4c4c4"/><rect x="169.42" y="197.10" width="1" height="1" fill="#c4c4c4"/><rect x="181.76" y="197.10" width="1" height="1" fill="#c4c4c4"/><rect x="194.10" y="197.10" width="1" height="1" fill="#c4c4c4"/><rect x="206.44" y="197.10" width="1" height="1" fill="#c4c4c4"/><rect x="218.78" y="197.10" width="1" height="1" fill="#c4c4c4"/><rect x="231.12" y="197.10" width="1" height="1" fill="#c4c4c4"/><rect x="243.46" y="197.10" width="1" height="1" fill="#c4c4c4"/><rect x="255.80" y="197.10" width="1" height="1" fill="#c4c4c4"/><rect x="268.14" y="197.10" width="1" height="1" fill="#c4c4c4"/><rect x="280.48" y="197.10" width="1" height="1" fill="#c4c4c4"/><rect x="292.82" y="197.10" width="1" height="1" fill="#c4c4c4"/><rect x="305.16" y="197.10" width="1" height="1" fill="#c4c4c4"/><rect x="317.50" y="197.10" width="1" height="1" fill="#c4c4c4"/><rect x="329.84" y="197.10" width="1" height="1" fill="#c4c4c4"/><rect x="342.18" y="197.10" width="1" height="1" fill="#c4c4c4"/><rect x="354.52" y="197.10" width="1" height="1" fill="#c4c4c4"/><rect x="366.86" y="197.10" width="1" height="1" fill="#c4c4c4"/><rect x="379.20" y="197.10" width="1" height="1" fill="#c4c4c4"/><rect x="391.54" y="197.10" width="1" height="1" fill="#c4c4c4"/><rect x="70.70" y="209.44" width="1" height="1" fill="#c4c4c4"/><rect x="83.04" y="209.44" width="1" height="1" fill="#c4c4c4"/><rect x="95.38" y="209.44" width="1" height="1" fill="#c4c4c4"/><rect x="107.72" y="209.44" width="1" height="1" fill="#c4c4c4"/><rect x="120.06" y="209.44" width="1" height="1" fill="#c4c4c4"/><rect x="132.40" y="209.44" width="1" height="1" fill="#c4c4c4"/><rect x="144.74" y="209.44" width="1" height="1" fill="#c4c4c4"/><rect x="157.08" y="209.44" width="1" height="1" fill="#c4c4c4"/><rect x="169.42" y="209.44" width="1" height="1" fill="#c4c4c4"/><rect x="181.76" y="209.44" width="1" height="1" fill="#c4c4c4"/><rect x="194.10" y="209.44" width="1" height="1" fill="#c4c4c4"/><rect x="206.44" y="209.44" width="1" height="1" fill="#c4c4c4"/><rect x="218.78" y="209.44" width="1" height="1" fill="#c4c4c4"/><rect x="231.12" y="209.44" width="1" height="1" fill="#c4c4c4"/><rect x="243.46" y="209.44" width="1" height="1" fill="#c4c4c4"/><rect x="255.80" y="209.44" width="1" height="1" fill="#c4c4c4"/><rect x="268.14" y="209.44" width="1" height="1" fill="#c4c4c4"/><rect x="280.48" y="209.44" width="1" height="1" fill="#c4c4c4"/><rect x="292.82" y="209.44" width="1" height="1" fill="#c4c4c4"/><rect x="305.16" y="209.44" width="1" height="1" fill="#c4c4c4"/><rect x="317.50" y="209.44" width="1" height="1" fill="#c4c4c4"/><rect x="329.84" y="209.44" width="1" height="1" fill="#c4c4c4"/><rect x="342.18" y="209.44" width="1" height="1" fill="#c4c4c4"/><rect x="354.52" y="209.44" width="1" height="1" fill="#c4c4c4"/><rect x="366.86" y="209.44" width="1" height="1" fill="#c4c4c4"/><rect x="379.20" y="209.44" width="1" height="1" fill="#c4c4c4"/><rect x="391.54" y="209.44" width="1" height="1" fill="#c4c4c4"/><rect x="70.70" y="221.78" width="1" height="1" fill="#c4c4c4"/><rect x="83.04" y="221.78" width="1" height="1" fill="#c4c4c4"/><rect x="95.38" y="221.78" width="1" height="1" fill="#c4c4c4"/><rect x="107.72" y="221.78" width="1" height="1" fill="#c4c4c4"/><rect x="120.06" y="221.78" width="1" height="1" fill="#c4c4c4"/><rect x="132.40" y="221.78" width="1" height="1" fill="#c4c4c4"/><rect x="144.74" y="221.78" width="1" height="1" fill="#c4c4c4"/><rect x="157.08" y="221.78" width="1" height="1" fill="#c4c4c4"/><rect x="169.42" y="221.78" width="1" height="1" fill="#c4c4c4"/><rect x="181.76" y="221.78" width="1" height="1" fill="#c4c4c4"/><rect x="194.10" y="221.78" width="1" height="1" fill="#c4c4c4"/><rect x="206.44" y="221.78" width="1" height="1" fill="#c4c4c4"/><rect x="218.78" y="221.78" width="1" height="1" fill="#c4c4c4"/><rect x="231.12" y="221.78" width="1" height="1" fill="#c4c4c4"/><rect x="243.46" y="221.78" width="1" height="1" fill="#c4c4c4"/><rect x="255.80" y="221.78" width="1" height="1" fill="#c4c4c4"/><rect x="268.14" y="221.78" width="1" height="1" fill="#c4c4c4"/><rect x="280.48" y="221.78" width="1" height="1" fill="#c4c4c4"/><rect x="292.82" y="221.78" width="1" height="1" fill="#c4c4c4"/><rect x="305.16" y="221.78" width="1" height="1" fill="#c4c4c4"/><rect x="317.50" y="221.78" width="1" height="1" fill="#c4c4c4"/><rect x="329.84" y="221.78" width="1" height="1" fill="#c4c4c4"/><rect x="342.18" y="221.78" width="1" height="1" fill="#c4c4c4"/><rect x="354.52" y="221.78" width="1" height="1" fill="#c4c4c4"/><rect x="366.86" y="221.78" width="1" height="1" fill="#c4c4c4"/><rect x="379.20" y="221.78" width="1" height="1" fill="#c4c4c4"/><rect x="391.54" y="221.78" width="1" height="1" fill="#c4c4c4"/><rect x="70.70" y="234.12" width="1" height="1" fill="#c4c4c4"/><rect x="83.04" y="234.12" width="1" height="1" fill="#c4c4c4"/><rect x="95.38" y="234.12" width="1" height="1" fill="#c4c4c4"/><rect x="107.72" y="234.12" width="1" height="1" fill="#c4c4c4"/><rect x="120.06" y="234.12" width="1" height="1" fill="#c4c4c4"/><rect x="132.40" y="234.12" width="1" height="1" fill="#c4c4c4"/><rect x="144.74" y="234.12" width="1" height="1" fill="#c4c4c4"/><rect x="157.08" y="234.12" width="1" height="1" fill="#c4c4c4"/><rect x="169.42" y="234.12" width="1" height="1" fill="#c4c4c4"/><rect x="181.76" y="234.12" width="1" height="1" fill="#c4c4c4"/><rect x="194.10" y="234.12" width="1" height="1" fill="#c4c4c4"/><rect x="206.44" y="234.12" width="1" height="1" fill="#c4c4c4"/><rect x="218.78" y="234.12" width="1" height="1" fill="#c4c4c4"/><rect x="231.12" y="234.12" width="1" height="1" fill="#c4c4c4"/><rect x="243.46" y="234.12" width="1" height="1" fill="#c4c4c4"/><rect x="255.80" y="234.12" width="1" height="1" fill="#c4c4c4"/><rect x="268.14" y="234.12" width="1" height="1" fill="#c4c4c4"/><rect x="280.48" y="234.12" width="1" height="1" fill="#c4c4c4"/><rect x="292.82" y="234.12" width="1" height="1" fill="#c4c4c4"/><rect x="305.16" y="234.12" width="1" height="1" fill="#c4c4c4"/><rect x="317.50" y="234.12" width="1" height="1" fill="#c4c4c4"/><rect x="329.84" y="234.12" width="1" height="1" fill="#c4c4c4"/><rect x="342.18" y="234.12" width="1" height="1" fill="#c4c4c4"/><rect x="354.52" y="234.12" width="1" height="1" fill="#c4c4c4"/><rect x="366.86" y="234.12" width="1" height="1" fill="#c4c4c4"/><rect x="379.20" y="234.12" width="1" height="1" fill="#c4c4c4"/><rect x="391.54" y="234.12" width="1" height="1" fill="#c4c4c4"/><rect x="70.70" y="246.46" width="1" height="1" fill="#c4c4c4"/><rect x="83.04" y="246.46" width="1" height="1" fill="#c4c4c4"/><rect x="95.38" y="246.46" width="1" height="1" fill="#c4c4c4"/><rect x="107.72" y="246.46" width="1" height="1" fill="#c4c4c4"/><rect x="120.06" y="246.46" width="1" height="1" fill="#c4c4c4"/><rect x="132.40" y="246.46" width="1" height="1" fill="#c4c4c4"/><rect x="144.74" y="246.46" width="1" height="1" fill="#c4c4c4"/><rect x="157.08" y="246.46" width="1" height="1" fill="#c4c4c4"/><rect x="169.42" y="246.46" width="1" height="1" fill="#c4c4c4"/><rect x="181.76" y="246.46" width="1" height="1" fill="#c4c4c4"/><rect x="194.10" y="246.46" width="1" height="1" fill="#c4c4c4"/><rect x="206.44" y="246.46" width="1" height="1" fill="#c4c4c4"/><rect x="218.78" y="246.46" width="1" height="1" fill="#c4c4c4"/><rect x="231.12" y="246.46" width="1" height="1" fill="#c4c4c4"/><rect x="243.46" y="246.46" width="1" height="1" fill="#c4c4c4"/><rect x="255.80" y="246.46" width="1" height="1" fill="#c4c4c4"/><rect x="268.14" y="246.46" width="1" height="1" fill="#c4c4c4"/><rect x="280.48" y="246.46" width="1" height="1" fill="#c4c4c4"/><rect x="292.82" y="246.46" width="1" height="1" fill="#c4c4c4"/><rect x="305.16" y="246.46" width="1" height="1" fill="#c4c4c4"/><rect x="317.50" y="246.46" width="1" height="1" fill="#c4c4c4"/><rect x="329.84" y="246.46" width="1" height="1" fill="#c4c4c4"/><rect x="342.18" y="246.46" width="1" height="1" fill="#c4c4c4"/><rect x="354.52" y="246.46" width="1" height="1" fill="#c4c4c4"/><rect x="366.86" y="246.46" width="1" height="1" fill="#c4c4c4"/><rect x="379.20" y="246.46" width="1" height="1" fill="#c4c4c4"/><rect x="391.54" y="246.46" width="1" height="1" fill="#c4c4c4"/><rect x="70.70" y="258.80" width="1" height="1" fill="#c4c4c4"/><rect x="83.04" y="258.80" width="1" height="1" fill="#c4c4c4"/><rect x="95.38" y="258.80" width="1" height="1" fill="#c4c4c4"/><rect x="107.72" y="258.80" width="1" height="1" fill="#c4c4c4"/><rect x="120.06" y="258.80" width="1" height="1" fill="#c4c4c4"/><rect x="132.40" y="258.80" width="1" height="1" fill="#c4c4c4"/><rect x="144.74" y="258.80" width="1" height="1" fill="#c4c4c4"/><rect x="157.08" y="258.80" width="1" height="1" fill="#c4c4c4"/><rect x="169.42" y="258.80" width="1" height="1" fill="#c4c4c4"/><rect x="181.76" y="258.80" width="1" height="1" fill="#c4c4c4"/><rect x="194.10" y="258.80" width="1" height="1" fill="#c4c4c4"/><rect x="206.44" y="258.80" width="1" height="1" fill="#c4c4c4"/><rect x="218.78" y="258.80" width="1" height="1" fill="#c4c4c4"/><rect x="231.12" y="258.80" width="1" height="1" fill="#c4c4c4"/><rect x="243.46" y="258.80" width="1" height="1" fill="#c4c4c4"/><rect x="255.80" y="258.80" width="1" height="1" fill="#c4c4c4"/><rect x="268.14" y="258.80" width="1" height="1" fill="#c4c4c4"/><rect x="280.48" y="258.80" width="1" height="1" fill="#c4c4c4"/><rect x="292.82" y="258.80" width="1" height="1" fill="#c4c4c4"/><rect x="305.16" y="258.80" width="1" height="1" fill="#c4c4c4"/><rect x="317.50" y="258.80" width="1" height="1" fill="#c4c4c4"/><rect x="329.84" y="258.80" width="1" height="1" fill="#c4c4c4"/><rect x="342.18" y="258.80" width="1" height="1" fill="#c4c4c4"/><rect x="354.52" y="258.80" width="1" height="1" fill="#c4c4c4"/><rect x="366.86" y="258.80" width="1" height="1" fill="#c4c4c4"/><rect x="379.20" y="258.80" width="1" height="1" fill="#c4c4c4"/><rect x="391.54" y="258.80" width="1" height="1" fill="#c4c4c4"/><rect x="70.70" y="271.14" width="1" height="1" fill="#c4c4c4"/><rect x="83.04" y="271.14" width="1" height="1" fill="#c4c4c4"/><rect x="95.38" y="271.14" width="1" height="1" fill="#c4c4c4"/><rect x="107.72" y="271.14" width="1" height="1" fill="#c4c4c4"/><rect x="120.06" y="271.14" width="1" height="1" fill="#c4c4c4"/><rect x="132.40" y="271.14" width="1" height="1" fill="#c4c4c4"/><rect x="144.74" y="271.14" width="1" height="1" fill="#c4c4c4"/><rect x="157.08" y="271.14" width="1" height="1" fill="#c4c4c4"/><rect x="169.42" y="271.14" width="1" height="1" fill="#c4c4c4"/><rect x="181.76" y="271.14" width="1" height="1" fill="#c4c4c4"/><rect x="194.10" y="271.14" width="1" height="1" fill="#c4c4c4"/><rect x="206.44" y="271.14" width="1" height="1" fill="#c4c4c4"/><rect x="218.78" y="271.14" width="1" height="1" fill="#c4c4c4"/><rect x="231.12" y="271.14" width="1" height="1" fill="#c4c4c4"/><rect x="243.46" y="271.14" width="1" height="1" fill="#c4c4c4"/><rect x="255.80" y="271.14" width="1" height="1" fill="#c4c4c4"/><rect x="268.14" y="271.14" width="1" height="1" fill="#c4c4c4"/><rect x="280.48" y="271.14" width="1" height="1" fill="#c4c4c4"/><rect x="292.82" y="271.14" width="1" height="1" fill="#c4c4c4"/><rect x="305.16" y="271.14" width="1" height="1" fill="#c4c4c4"/><rect x="317.50" y="271.14" width="1" height="1" fill="#c4c4c4"/><rect x="329.84" y="271.14" width="1" height="1" fill="#c4c4c4"/><rect x="342.18" y="271.14" width="1" height="1" fill="#c4c4c4"/><rect x="354.52" y="271.14" width="1" height="1" fill="#c4c4c4"/><rect x="366.86" y="271.14" width="1" height="1" fill="#c4c4c4"/><rect x="379.20" y="271.14" width="1" height="1" fill="#c4c4c4"/><rect x="391.54" y="271.14" width="1" height="1" fill="#c4c4c4"/><rect x="70.70" y="283.48" width="1" height="1" fill="#c4c4c4"/><rect x="83.04" y="283.48" width="1" height="1" fill="#c4c4c4"/><rect x="95.38" y="283.48" width="1" height="1" fill="#c4c4c4"/><rect x="107.72" y="283.48" width="1" height="1" fill="#c4c4c4"/><rect x="120.06" y="283.48" width="1" height="1" fill="#c4c4c4"/><rect x="132.40" y="283.48" width="1" height="1" fill="#c4c4c4"/><rect x="144.74" y="283.48" width="1" height="1" fill="#c4c4c4"/><rect x="157.08" y="283.48" width="1" height="1" fill="#c4c4c4"/><rect x="169.42" y="283.48" width="1" height="1" fill="#c4c4c4"/><rect x="181.76" y="283.48" width="1" height="1" fill="#c4c4c4"/><rect x="194.10" y="283.48" width="1" height="1" fill="#c4c4c4"/><rect x="206.44" y="283.48" width="1" height="1" fill="#c4c4c4"/><rect x="218.78" y="283.48" width="1" height="1" fill="#c4c4c4"/><rect x="231.12" y="283.48" width="1" height="1" fill="#c4c4c4"/><rect x="243.46" y="283.48" width="1" height="1" fill="#c4c4c4"/><rect x="255.80" y="283.48" width="1" height="1" fill="#c4c4c4"/><rect x="268.14" y="283.48" width="1" height="1" fill="#c4c4c4"/><rect x="280.48" y="283.48" width="1" height="1" fill="#c4c4c4"/><rect x="292.82" y="283.48" width="1" height="1" fill="#c4c4c4"/><rect x="305.16" y="283.48" width="1" height="1" fill="#c4c4c4"/><rect x="317.50" y="283.48" width="1" height="1" fill="#c4c4c4"/><rect x="329.84" y="283.48" width="1" height="1" fill="#c4c4c4"/><rect x="342.18" y="283.48" width="1" height="1" fill="#c4c4c4"/><rect x="354.52" y="283.48" width="1" height="1" fill="#c4c4c4"/><rect x="366.86" y="283.48" width="1" height="1" fill="#c4c4c4"/><rect x="379.20" y="283.48" width="1" height="1" fill="#c4c4c4"/><rect x="391.54" y="283.48" width="1" height="1" fill="#c4c4c4"/><rect x="70.70" y="295.82" width="1" height="1" fill="#c4c4c4"/><rect x="83.04" y="295.82" width="1" height="1" fill="#c4c4c4"/><rect x="95.38" y="295.82" width="1" height="1" fill="#c4c4c4"/><rect x="107.72" y="295.82" width="1" height="1" fill="#c4c4c4"/><rect x="120.06" y="295.82" width="1" height="1" fill="#c4c4c4"/><rect x="132.40" y="295.82" width="1" height="1" fill="#c4c4c4"/><rect x="144.74" y="295.82" width="1" height="1" fill="#c4c4c4"/><rect x="157.08" y="295.82" width="1" height="1" fill="#c4c4c4"/><rect x="169.42" y="295.82" width="1" height="1" fill="#c4c4c4"/><rect x="181.76" y="295.82" width="1" height="1" fill="#c4c4c4"/><rect x="194.10" y="295.82" width="1" height="1" fill="#c4c4c4"/><rect x="206.44" y="295.82" width="1" height="1" fill="#c4c4c4"/><rect x="218.78" y="295.82" width="1" height="1" fill="#c4c4c4"/><rect x="231.12" y="295.82" width="1" height="1" fill="#c4c4c4"/><rect x="243.46" y="295.82" width="1" height="1" fill="#c4c4c4"/><rect x="255.80" y="295.82" width="1" height="1" fill="#c4c4c4"/><rect x="268.14" y="295.82" width="1" height="1" fill="#c4c4c4"/><rect x="280.48" y="295.82" width="1" height="1" fill="#c4c4c4"/><rect x="292.82" y="295.82" width="1" height="1" fill="#c4c4c4"/><rect x="305.16" y="295.82" width="1" height="1" fill="#c4c4c4"/><rect x="317.50" y="295.82" width="1" height="1" fill="#c4c4c4"/><rect x="329.84" y="295.82" width="1" height="1" fill="#c4c4c4"/><rect x="342.18" y="295.82" width="1" height="1" fill="#c4c4c4"/><rect x="354.52" y="295.82" width="1" height="1" fill="#c4c4c4"/><rect x="366.86" y="295.82" width="1" height="1" fill="#c4c4c4"/><rect x="379.20" y="295.82" width="1" height="1" fill="#c4c4c4"/><rect x="391.54" y="295.82" width="1" height="1" fill="#c4c4c4"/><rect x="70.70" y="308.16" width="1" height="1" fill="#c4c4c4"/><rect x="83.04" y="308.16" width="1" height="1" fill="#c4c4c4"/><rect x="95.38" y="308.16" width="1" height="1" fill="#c4c4c4"/><rect x="107.72" y="308.16" width="1" height="1" fill="#c4c4c4"/><rect x="120.06" y="308.16" width="1" height="1" fill="#c4c4c4"/><rect x="132.40" y="308.16" width="1" height="1" fill="#c4c4c4"/><rect x="144.74" y="308.16" width="1" height="1" fill="#c4c4c4"/><rect x="157.08" y="308.16" width="1" height="1" fill="#c4c4c4"/><rect x="169.42" y="308.16" width="1" height="1" fill="#c4c4c4"/><rect x="181.76" y="308.16" width="1" height="1" fill="#c4c4c4"/><rect x="194.10" y="308.16" width="1" height="1" fill="#c4c4c4"/><rect x="206.44" y="308.16" width="1" height="1" fill="#c4c4c4"/><rect x="218.78" y="308.16" width="1" height="1" fill="#c4c4c4"/><rect x="231.12" y="308.16" width="1" height="1" fill="#c4c4c4"/><rect x="243.46" y="308.16" width="1" height="1" fill="#c4c4c4"/><rect x="255.80" y="308.16" width="1" height="1" fill="#c4c4c4"/><rect x="268.14" y="308.16" width="1" height="1" fill="#c4c4c4"/><rect x="280.48" y="308.16" width="1" height="1" fill="#c4c4c4"/><rect x="292.82" y="308.16" width="1" height="1" fill="#c4c4c4"/><rect x="305.16" y="308.16" width="1" height="1" fill="#c4c4c4"/><rect x="317.50" y="308.16" width="1" height="1" fill="#c4c4c4"/><rect x="329.84" y="308.16" width="1" height="1" fill="#c4c4c4"/><rect x="342.18" y="308.16" width="1" height="1" fill="#c4c4c4"/><rect x="354.52" y="308.16" width="1" height="1" fill="#c4c4c4"/><rect x="366.86" y="308.16" width="1" height="1" fill="#c4c4c4"/><rect x="379.20" y="308.16" width="1" height="1" fill="#c4c4c4"/><rect x="391.54" y="308.16" width="1" height="1" fill="#c4c4c4"/><rect x="70.70" y="320.50" width="1" height="1" fill="#c4c4c4"/><rect x="83.04" y="320.50" width="1" height="1" fill="#c4c4c4"/><rect x="95.38" y="320.50" width="1" height="1" fill="#c4c4c4"/><rect x="107.72" y="320.50" width="1" height="1" fill="#c4c4c4"/><rect x="120.06" y="320.50" width="1" height="1" fill="#c4c4c4"/><rect x="132.40" y="320.50" width="1" height="1" fill="#c4c4c4"/><rect x="144.74" y="320.50" width="1" height="1" fill="#c4c4c4"/><rect x="157.08" y="320.50" width="1" height="1" fill="#c4c4c4"/><rect x="169.42" y="320.50" width="1" height="1" fill="#c4c4c4"/><rect x="181.76" y="320.50" width="1" height="1" fill="#c4c4c4"/><rect x="194.10" y="320.50" width="1" height="1" fill="#c4c4c4"/><rect x="206.44" y="320.50" width="1" height="1" fill="#c4c4c4"/><rect x="218.78" y="320.50" width="1" height="1" fill="#c4c4c4"/><rect x="231.12" y="320.50" width="1" height="1" fill="#c4c4c4"/><rect x="243.46" y="320.50" width="1" height="1" fill="#c4c4c4"/><rect x="255.80" y="320.50" width="1" height="1" fill="#c4c4c4"/><rect x="268.14" y="320.50" width="1" height="1" fill="#c4c4c4"/><rect x="280.48" y="320.50" width="1" height="1" fill="#c4c4c4"/><rect x="292.82" y="320.50" width="1" height="1" fill="#c4c4c4"/><rect x="305.16" y="320.50" width="1" height="1" fill="#c4c4c4"/><rect x="317.50" y="320.50" width="1" height="1" fill="#c4c4c4"/><rect x="329.84" y="320.50" width="1" height="1" fill="#c4c4c4"/><rect x="342.18" y="320.50" width="1" height="1" fill="#c4c4c4"/><rect x="354.52" y="320.50" width="1" height="1" fill="#c4c4c4"/><rect x="366.86" y="320.50" width="1" height="1" fill="#c4c4c4"/><rect x="379.20" y="320.50" width="1" height="1" fill="#c4c4c4"/><rect x="391.54" y="320.50" width="1" height="1" fill="#c4c4c4"/><rect x="70.70" y="332.84" width="1" height="1" fill="#c4c4c4"/><rect x="83.04" y="332.84" width="1" height="1" fill="#c4c4c4"/><rect x="95.38" y="332.84" width="1" height="1" fill="#c4c4c4"/><rect x="107.72" y="332.84" width="1" height="1" fill="#c4c4c4"/><rect x="120.06" y="332.84" width="1" height="1" fill="#c4c4c4"/><rect x="132.40" y="332.84" width="1" height="1" fill="#c4c4c4"/><rect x="144.74" y="332.84" width="1" height="1" fill="#c4c4c4"/><rect x="157.08" y="332.84" width="1" height="1" fill="#c4c4c4"/><rect x="169.42" y="332.84" width="1" height="1" fill="#c4c4c4"/><rect x="181.76" y="332.84" width="1" height="1" fill="#c4c4c4"/><rect x="194.10" y="332.84" width="1" height="1" fill="#c4c4c4"/><rect x="206.44" y="332.84" width="1" height="1" fill="#c4c4c4"/><rect x="218.78" y="332.84" width="1" height="1" fill="#c4c4c4"/><rect x="231.12" y="332.84" width="1" height="1" fill="#c4c4c4"/><rect x="243.46" y="332.84" width="1" height="1" fill="#c4c4c4"/><rect x="255.80" y="332.84" width="1" height="1" fill="#c4c4c4"/><rect x="268.14" y="332.84" width="1" height="1" fill="#c4c4c4"/><rect x="280.48" y="332.84" width="1" height="1" fill="#c4c4c4"/><rect x="292.82" y="332.84" width="1" height="1" fill="#c4c4c4"/><rect x="305.16" y="332.84" width="1" height="1" fill="#c4c4c4"/><rect x="317.50" y="332.84" width="1" height="1" fill="#c4c4c4"/><rect x="329.84" y="332.84" width="1" height="1" fill="#c4c4c4"/><rect x="342.18" y="332.84" width="1" height="1" fill="#c4c4c4"/><rect x="354.52" y="332.84" width="1" height="1" fill="#c4c4c4"/><rect x="366.86" y="332.84" width="1" height="1" fill="#c4c4c4"/><rect x="379.20" y="332.84" width="1" height="1" fill="#c4c4c4"/><rect x="391.54" y="332.84" width="1" height="1" fill="#c4c4c4"/><rect x="70.70" y="345.18" width="1" height="1" fill="#c4c4c4"/><rect x="83.04" y="345.18" width="1" height="1" fill="#c4c4c4"/><rect x="95.38" y="345.18" width="1" height="1" fill="#c4c4c4"/><rect x="107.72" y="345.18" width="1" height="1" fill="#c4c4c4"/><rect x="120.06" y="345.18" width="1" height="1" fill="#c4c4c4"/><rect x="132.40" y="345.18" width="1" height="1" fill="#c4c4c4"/><rect x="144.74" y="345.18" width="1" height="1" fill="#c4c4c4"/><rect x="157.08" y="345.18" width="1" height="1" fill="#c4c4c4"/><rect x="169.42" y="345.18" width="1" height="1" fill="#c4c4c4"/><rect x="181.76" y="345.18" width="1" height="1" fill="#c4c4c4"/><rect x="194.10" y="345.18" width="1" height="1" fill="#c4c4c4"/><rect x="206.44" y="345.18" width="1" height="1" fill="#c4c4c4"/><rect x="218.78" y="345.18" width="1" height="1" fill="#c4c4c4"/><rect x="231.12" y="345.18" width="1" height="1" fill="#c4c4c4"/><rect x="243.46" y="345.18" width="1" height="1" fill="#c4c4c4"/><rect x="255.80" y="345.18" width="1" height="1" fill="#c4c4c4"/><rect x="268.14" y="345.18" width="1" height="1" fill="#c4c4c4"/><rect x="280.48" y="345.18" width="1" height="1" fill="#c4c4c4"/><rect x="292.82" y="345.18" width="1" height="1" fill="#c4c4c4"/><rect x="305.16" y="345.18" width="1" height="1" fill="#c4c4c4"/><rect x="317.50" y="345.18" width="1" height="1" fill="#c4c4c4"/><rect x="329.84" y="345.18" width="1" height="1" fill="#c4c4c4"/><rect x="342.18" y="345.18" width="1" height="1" fill="#c4c4c4"/><rect x="354.52" y="345.18" width="1" height="1" fill="#c4c4c4"/><rect x="366.86" y="345.18" width="1" height="1" fill="#c4c4c4"/><rect x="379.20" y="345.18" width="1" height="1" fill="#c4c4c4"/><rect x="391.54" y="345.18" width="1" height="1" fill="#c4c4c4"/><rect x="70.70" y="357.52" width="1" height="1" fill="#c4c4c4"/><rect x="83.04" y="357.52" width="1" height="1" fill="#c4c4c4"/><rect x="95.38" y="357.52" width="1" height="1" fill="#c4c4c4"/><rect x="107.72" y="357.52" width="1" height="1" fill="#c4c4c4"/><rect x="120.06" y="357.52" width="1" height="1" fill="#c4c4c4"/><rect x="132.40" y="357.52" width="1" height="1" fill="#c4c4c4"/><rect x="144.74" y="357.52" width="1" height="1" fill="#c4c4c4"/><rect x="157.08" y="357.52" width="1" height="1" fill="#c4c4c4"/><rect x="169.42" y="357.52" width="1" height="1" fill="#c4c4c4"/><rect x="181.76" y="357.52" width="1" height="1" fill="#c4c4c4"/><rect x="194.10" y="357.52" width="1" height="1" fill="#c4c4c4"/><rect x="206.44" y="357.52" width="1" height="1" fill="#c4c4c4"/><rect x="218.78" y="357.52" width="1" height="1" fill="#c4c4c4"/><rect x="231.12" y="357.52" width="1" height="1" fill="#c4c4c4"/><rect x="243.46" y="357.52" width="1" height="1" fill="#c4c4c4"/><rect x="255.80" y="357.52" width="1" height="1" fill="#c4c4c4"/><rect x="268.14" y="357.52" width="1" height="1" fill="#c4c4c4"/><rect x="280.48" y="357.52" width="1" height="1" fill="#c4c4c4"/><rect x="292.82" y="357.52" width="1" height="1" fill="#c4c4c4"/><rect x="305.16" y="357.52" width="1" height="1" fill="#c4c4c4"/><rect x="317.50" y="357.52" width="1" height="1" fill="#c4c4c4"/><rect x="329.84" y="357.52" width="1" height="1" fill="#c4c4c4"/><rect x="342.18" y="357.52" width="1" height="1" fill="#c4c4c4"/><rect x="354.52" y="357.52" width="1" height="1" fill="#c4c4c4"/><rect x="366.86" y="357.52" width="1" height="1" fill="#c4c4c4"/><rect x="379.20" y="357.52" width="1" height="1" fill="#c4c4c4"/><rect x="391.54" y="357.52" width="1" height="1" fill="#c4c4c4"/><rect x="70.70" y="369.86" width="1" height="1" fill="#c4c4c4"/><rect x="83.04" y="369.86" width="1" height="1" fill="#c4c4c4"/><rect x="95.38" y="369.86" width="1" height="1" fill="#c4c4c4"/><rect x="107.72" y="369.86" width="1" height="1" fill="#c4c4c4"/><rect x="120.06" y="369.86" width="1" height="1" fill="#c4c4c4"/><rect x="132.40" y="369.86" width="1" height="1" fill="#c4c4c4"/><rect x="144.74" y="369.86" width="1" height="1" fill="#c4c4c4"/><rect x="157.08" y="369.86" width="1" height="1" fill="#c4c4c4"/><rect x="169.42" y="369.86" width="1" height="1" fill="#c4c4c4"/><rect x="181.76" y="369.86" width="1" height="1" fill="#c4c4c4"/><rect x="194.10" y="369.86" width="1" height="1" fill="#c4c4c4"/><rect x="206.44" y="369.86" width="1" height="1" fill="#c4c4c4"/><rect x="218.78" y="369.86" width="1" height="1" fill="#c4c4c4"/><rect x="231.12" y="369.86" width="1" height="1" fill="#c4c4c4"/><rect x="243.46" y="369.86" width="1" height="1" fill="#c4c4c4"/><rect x="255.80" y="369.86" width="1" height="1" fill="#c4c4c4"/><rect x="268.14" y="369.86" width="1" height="1" fill="#c4c4c4"/><rect x="280.48" y="369.86" width="1" height="1" fill="#c4c4c4"/><rect x="292.82" y="369.86" width="1" height="1" fill="#c4c4c4"/><rect x="305.16" y="369.86" width="1" height="1" fill="#c4c4c4"/><rect x="317.50" y="369.86" width="1" height="1" fill="#c4c4c4"/><rect x="329.84" y="369.86" width="1" height="1" fill="#c4c4c4"/><rect x="342.18" y="369.86" width="1" height="1" fill="#c4c4c4"/><rect x="354.52" y="369.86" width="1" height="1" fill="#c4c4c4"/><rect x="366.86" y="369.86" width="1" height="1" fill="#c4c4c4"/><rect x="379.20" y="369.86" width="1" height="1" fill="#c4c4c4"/><rect x="391.54" y="369.86" width="1" height="1" fill="#c4c4c4"/><rect x="70.70" y="382.20" width="1" height="1" fill="#c4c4c4"/><rect x="83.04" y="382.20" width="1" height="1" fill="#c4c4c4"/><rect x="95.38" y="382.20" width="1" height="1" fill="#c4c4c4"/><rect x="107.72" y="382.20" width="1" height="1" fill="#c4c4c4"/><rect x="120.06" y="382.20" width="1" height="1" fill="#c4c4c4"/><rect x="132.40" y="382.20" width="1" height="1" fill="#c4c4c4"/><rect x="144.74" y="382.20" width="1" height="1" fill="#c4c4c4"/><rect x="157.08" y="382.20" width="1" height="1" fill="#c4c4c4"/><rect x="169.42" y="382.20" width="1" height="1" fill="#c4c4c4"/><rect x="181.76" y="382.20" width="1" height="1" fill="#c4c4c4"/><rect x="194.10" y="382.20" width="1" height="1" fill="#c4c4c4"/><rect x="206.44" y="382.20" width="1" height="1" fill="#c4c4c4"/><rect x="218.78" y="382.20" width="1" height="1" fill="#c4c4c4"/><rect x="231.12" y="382.20" width="1" height="1" fill="#c4c4c4"/><rect x="243.46" y="382.20" width="1" height="1" fill="#c4c4c4"/><rect x="255.80" y="382.20" width="1" height="1" fill="#c4c4c4"/><rect x="268.14" y="382.20" width="1" height="1" fill="#c4c4c4"/><rect x="280.48" y="382.20" width="1" height="1" fill="#c4c4c4"/><rect x="292.82" y="382.20" width="1" height="1" fill="#c4c4c4"/><rect x="305.16" y="382.20" width="1" height="1" fill="#c4c4c4"/><rect x="317.50" y="382.20" width="1" height="1" fill="#c4c4c4"/><rect x="329.84" y="382.20" width="1" height="1" fill="#c4c4c4"/><rect x="342.18" y="382.20" width="1" height="1" fill="#c4c4c4"/><rect x="354.52" y="382.20" width="1" height="1" fill="#c4c4c4"/><rect x="366.86" y="382.20" width="1" height="1" fill="#c4c4c4"/><rect x="379.20" y="382.20" width="1" height="1" fill="#c4c4c4"/><rect x="391.54" y="382.20" width="1" height="1" fill="#c4c4c4"/><rect x="70.70" y="394.54" width="1" height="1" fill="#c4c4c4"/><rect x="83.04" y="394.54" width="1" height="1" fill="#c4c4c4"/><rect x="95.38" y="394.54" width="1" height="1" fill="#c4c4c4"/><rect x="107.72" y="394.54" width="1" height="1" fill="#c4c4c4"/><rect x="120.06" y="394.54" width="1" height="1" fill="#c4c4c4"/><rect x="132.40" y="394.54" width="1" height="1" fill="#c4c4c4"/><rect x="144.74" y="394.54" width="1" height="1" fill="#c4c4c4"/><rect x="157.08" y="394.54" width="1" height="1" fill="#c4c4c4"/><rect x="169.42" y="394.54" width="1" height="1" fill="#c4c4c4"/><rect x="181.76" y="394.54" width="1" height="1" fill="#c4c4c4"/><rect x="194.10" y="394.54" width="1" height="1" fill="#c4c4c4"/><rect x="206.44" y="394.54" width="1" height="1" fill="#c4c4c4"/><rect x="218.78" y="394.54" width="1" height="1" fill="#c4c4c4"/><rect x="231.12" y="394.54" width="1" height="1" fill="#c4c4c4"/><rect x="243.46" y="394.54" width="1" height="1" fill="#c4c4c4"/><rect x="255.80" y="394.54" width="1" height="1" fill="#c4c4c4"/><rect x="268.14" y="394.54" width="1" height="1" fill="#c4c4c4"/><rect x="280.48" y="394.54" width="1" height="1" fill="#c4c4c4"/><rect x="292.82" y="394.54" width="1" height="1" fill="#c4c4c4"/><rect x="305.16" y="394.54" width="1" height="1" fill="#c4c4c4"/><rect x="317.50" y="394.54" width="1" height="1" fill="#c4c4c4"/><rect x="329.84" y="394.54" width="1" height="1" fill="#c4c4c4"/><rect x="342.18" y="394.54" width="1" height="1" fill="#c4c4c4"/><rect x="354.52" y="394.54" width="1" height="1" fill="#c4c4c4"/><rect x="366.86" y="394.54" width="1" height="1" fill="#c4c4c4"/><rect x="379.20" y="394.54" width="1" height="1" fill="#c4c4c4"/><rect x="391.54" y="394.54" width="1" height="1" fill="#c4c4c4"/><rect x="70.70" y="406.88" width="1" height="1" fill="#c4c4c4"/><rect x="83.04" y="406.88" width="1" height="1" fill="#c4c4c4"/><rect x="95.38" y="406.88" width="1" height="1" fill="#c4c4c4"/><rect x="107.72" y="406.88" width="1" height="1" fill="#c4c4c4"/><rect x="120.06" y="406.88" width="1" height="1" fill="#c4c4c4"/><rect x="132.40" y="406.88" width="1" height="1" fill="#c4c4c4"/><rect x="144.74" y="406.88" width="1" height="1" fill="#c4c4c4"/><rect x="157.08" y="406.88" width="1" height="1" fill="#c4c4c4"/><rect x="169.42" y="406.88" width="1" height="1" fill="#c4c4c4"/><rect x="181.76" y="406.88" width="1" height="1" fill="#c4c4c4"/><rect x="194.10" y="406.88" width="1" height="1" fill="#c4c4c4"/><rect x="206.44" y="406.88" width="1" height="1" fill="#c4c4c4"/><rect x="218.78" y="406.88" width="1" height="1" fill="#c4c4c4"/><rect x="231.12" y="406.88" width="1" height="1" fill="#c4c4c4"/><rect x="243.46" y="406.88" width="1" height="1" fill="#c4c4c4"/><rect x="255.80" y="406.88" width="1" height="1" fill="#c4c4c4"/><rect x="268.14" y="406.88" width="1" height="1" fill="#c4c4c4"/><rect x="280.48" y="406.88" width="1" height="1" fill="#c4c4c4"/><rect x="292.82" y="406.88" width="1" height="1" fill="#c4c4c4"/><rect x="305.16" y="406.88" width="1" height="1" fill="#c4c4c4"/><rect x="317.50" y="406.88" width="1" height="1" fill="#c4c4c4"/><rect x="329.84" y="406.88" width="1" height="1" fill="#c4c4c4"/><rect x="342.18" y="406.88" width="1" height="1" fill="#c4c4c4"/><rect x="354.52" y="406.88" width="1" height="1" fill="#c4c4c4"/><rect x="366.86" y="406.88" width="1" height="1" fill="#c4c4c4"/><rect x="379.20" y="406.88" width="1" height="1" fill="#c4c4c4"/><rect x="391.54" y="406.88" width="1" height="1" fill="#c4c4c4"/><rect x="70.70" y="419.22" width="1" height="1" fill="#c4c4c4"/><rect x="83.04" y="419.22" width="1" height="1" fill="#c4c4c4"/><rect x="95.38" y="419.22" width="1" height="1" fill="#c4c4c4"/><rect x="107.72" y="419.22" width="1" height="1" fill="#c4c4c4"/><rect x="120.06" y="419.22" width="1" height="1" fill="#c4c4c4"/><rect x="132.40" y="419.22" width="1" height="1" fill="#c4c4c4"/><rect x="144.74" y="419.22" width="1" height="1" fill="#c4c4c4"/><rect x="157.08" y="419.22" width="1" height="1" fill="#c4c4c4"/><rect x="169.42" y="419.22" width="1" height="1" fill="#c4c4c4"/><rect x="181.76" y="419.22" width="1" height="1" fill="#c4c4c4"/><rect x="194.10" y="419.22" width="1" height="1" fill="#c4c4c4"/><rect x="206.44" y="419.22" width="1" height="1" fill="#c4c4c4"/><rect x="218.78" y="419.22" width="1" height="1" fill="#c4c4c4"/><rect x="231.12" y="419.22" width="1" height="1" fill="#c4c4c4"/><rect x="243.46" y="419.22" width="1" height="1" fill="#c4c4c4"/><rect x="255.80" y="419.22" width="1" height="1" fill="#c4c4c4"/><rect x="268.14" y="419.22" width="1" height="1" fill="#c4c4c4"/><rect x="280.48" y="419.22" width="1" height="1" fill="#c4c4c4"/><rect x="292.82" y="419.22" width="1" height="1" fill="#c4c4c4"/><rect x="305.16" y="419.22" width="1" height="1" fill="#c4c4c4"/><rect x="317.50" y="419.22" width="1" height="1" fill="#c4c4c4"/><rect x="329.84" y="419.22" width="1" height="1" fill="#c4c4c4"/><rect x="342.18" y="419.22" width="1" height="1" fill="#c4c4c4"/><rect x="354.52" y="419.22" width="1" height="1" fill="#c4c4c4"/><rect x="366.86" y="419.22" width="1" height="1" fill="#c4c4c4"/><rect x="379.20" y="419.22" width="1" height="1" fill="#c4c4c4"/><rect x="391.54" y="419.22" width="1" height="1" fill="#c4c4c4"/><rect x="70.70" y="431.56" width="1" height="1" fill="#c4c4c4"/><rect x="83.04" y="431.56" width="1" height="1" fill="#c4c4c4"/><rect x="95.38" y="431.56" width="1" height="1" fill="#c4c4c4"/><rect x="107.72" y="431.56" width="1" height="1" fill="#c4c4c4"/><rect x="120.06" y="431.56" width="1" height="1" fill="#c4c4c4"/><rect x="132.40" y="431.56" width="1" height="1" fill="#c4c4c4"/><rect x="144.74" y="431.56" width="1" height="1" fill="#c4c4c4"/><rect x="157.08" y="431.56" width="1" height="1" fill="#c4c4c4"/><rect x="169.42" y="431.56" width="1" height="1" fill="#c4c4c4"/><rect x="181.76" y="431.56" width="1" height="1" fill="#c4c4c4"/><rect x="194.10" y="431.56" width="1" height="1" fill="#c4c4c4"/><rect x="206.44" y="431.56" width="1" height="1" fill="#c4c4c4"/><rect x="218.78" y="431.56" width="1" height="1" fill="#c4c4c4"/><rect x="231.12" y="431.56" width="1" height="1" fill="#c4c4c4"/><rect x="243.46" y="431.56" width="1" height="1" fill="#c4c4c4"/><rect x="255.80" y="431.56" width="1" height="1" fill="#c4c4c4"/><rect x="268.14" y="431.56" width="1" height="1" fill="#c4c4c4"/><rect x="280.48" y="431.56" width="1" height="1" fill="#c4c4c4"/><rect x="292.82" y="431.56" width="1" height="1" fill="#c4c4c4"/><rect x="305.16" y="431.56" width="1" height="1" fill="#c4c4c4"/><rect x="317.50" y="431.56" width="1" height="1" fill="#c4c4c4"/><rect x="329.84" y="431.56" width="1" height="1" fill="#c4c4c4"/><rect x="342.18" y="431.56" width="1" height="1" fill="#c4c4c4"/><rect x="354.52" y="431.56" width="1" height="1" fill="#c4c4c4"/><rect x="366.86" y="431.56" width="1" height="1" fill="#c4c4c4"/><rect x="379.20" y="431.56" width="1" height="1" fill="#c4c4c4"/><rect x="391.54" y="431.56" width="1" height="1" fill="#c4c4c4"/><rect x="70.70" y="443.90" width="1" height="1" fill="#c4c4c4"/><rect x="83.04" y="443.90" width="1" height="1" fill="#c4c4c4"/><rect x="95.38" y="443.90" width="1" height="1" fill="#c4c4c4"/><rect x="107.72" y="443.90" width="1" height="1" fill="#c4c4c4"/><rect x="120.06" y="443.90" width="1" height="1" fill="#c4c4c4"/><rect x="132.40" y="443.90" width="1" height="1" fill="#c4c4c4"/><rect x="144.74" y="443.90" width="1" height="1" fill="#c4c4c4"/><rect x="157.08" y="443.90" width="1" height="1" fill="#c4c4c4"/><rect x="169.42" y="443.90" width="1" height="1" fill="#c4c4c4"/><rect x="181.76" y="443.90" width="1" height="1" fill="#c4c4c4"/><rect x="194.10" y="443.90" width="1" height="1" fill="#c4c4c4"/><rect x="206.44" y="443.90" width="1" height="1" fill="#c4c4c4"/><rect x="218.78" y="443.90" width="1" height="1" fill="#c4c4c4"/><rect x="231.12" y="443.90" width="1" height="1" fill="#c4c4c4"/><rect x="243.46" y="443.90" width="1" height="1" fill="#c4c4c4"/><rect x="255.80" y="443.90" width="1" height="1" fill="#c4c4c4"/><rect x="268.14" y="443.90" width="1" height="1" fill="#c4c4c4"/><rect x="280.48" y="443.90" width="1" height="1" fill="#c4c4c4"/><rect x="292.82" y="443.90" width="1" height="1" fill="#c4c4c4"/><rect x="305.16" y="443.90" width="1" height="1" fill="#c4c4c4"/><rect x="317.50" y="443.90" width="1" height="1" fill="#c4c4c4"/><rect x="329.84" y="443.90" width="1" height="1" fill="#c4c4c4"/><rect x="342.18" y="443.90" width="1" height="1" fill="#c4c4c4"/><rect x="354.52" y="443.90" width="1" height="1" fill="#c4c4c4"/><rect x="366.86" y="443.90" width="1" height="1" fill="#c4c4c4"/><rect x="379.20" y="443.90" width="1" height="1" fill="#c4c4c4"/><rect x="391.54" y="443.90" width="1" height="1" fill="#c4c4c4"/><rect x="70.70" y="456.24" width="1" height="1" fill="#c4c4c4"/><rect x="83.04" y="456.24" width="1" height="1" fill="#c4c4c4"/><rect x="95.38" y="456.24" width="1" height="1" fill="#c4c4c4"/><rect x="107.72" y="456.24" width="1" height="1" fill="#c4c4c4"/><rect x="120.06" y="456.24" width="1" height="1" fill="#c4c4c4"/><rect x="132.40" y="456.24" width="1" height="1" fill="#c4c4c4"/><rect x="144.74" y="456.24" width="1" height="1" fill="#c4c4c4"/><rect x="157.08" y="456.24" width="1" height="1" fill="#c4c4c4"/><rect x="169.42" y="456.24" width="1" height="1" fill="#c4c4c4"/><rect x="181.76" y="456.24" width="1" height="1" fill="#c4c4c4"/><rect x="194.10" y="456.24" width="1" height="1" fill="#c4c4c4"/><rect x="206.44" y="456.24" width="1" height="1" fill="#c4c4c4"/><rect x="218.78" y="456.24" width="1" height="1" fill="#c4c4c4"/><rect x="231.12" y="456.24" width="1" height="1" fill="#c4c4c4"/><rect x="243.46" y="456.24" width="1" height="1" fill="#c4c4c4"/><rect x="255.80" y="456.24" width="1" height="1" fill="#c4c4c4"/><rect x="268.14" y="456.24" width="1" height="1" fill="#c4c4c4"/><rect x="280.48" y="456.24" width="1" height="1" fill="#c4c4c4"/><rect x="292.82" y="456.24" width="1" height="1" fill="#c4c4c4"/><rect x="305.16" y="456.24" width="1" height="1" fill="#c4c4c4"/><rect x="317.50" y="456.24" width="1" height="1" fill="#c4c4c4"/><rect x="329.84" y="456.24" width="1" height="1" fill="#c4c4c4"/><rect x="342.18" y="456.24" width="1" height="1" fill="#c4c4c4"/><rect x="354.52" y="456.24" width="1" height="1" fill="#c4c4c4"/><rect x="366.86" y="456.24" width="1" height="1" fill="#c4c4c4"/><rect x="379.20" y="456.24" width="1" height="1" fill="#c4c4c4"/><rect x="391.54" y="456.24" width="1" height="1" fill="#c4c4c4"/><rect x="70.70" y="468.58" width="1" height="1" fill="#c4c4c4"/><rect x="83.04" y="468.58" width="1" height="1" fill="#c4c4c4"/><rect x="95.38" y="468.58" width="1" height="1" fill="#c4c4c4"/><rect x="107.72" y="468.58" width="1" height="1" fill="#c4c4c4"/><rect x="120.06" y="468.58" width="1" height="1" fill="#c4c4c4"/><rect x="132.40" y="468.58" width="1" height="1" fill="#c4c4c4"/><rect x="144.74" y="468.58" width="1" height="1" fill="#c4c4c4"/><rect x="157.08" y="468.58" width="1" height="1" fill="#c4c4c4"/><rect x="169.42" y="468.58" width="1" height="1" fill="#c4c4c4"/><rect x="181.76" y="468.58" width="1" height="1" fill="#c4c4c4"/><rect x="194.10" y="468.58" width="1" height="1" fill="#c4c4c4"/><rect x="206.44" y="468.58" width="1" height="1" fill="#c4c4c4"/><rect x="218.78" y="468.58" width="1" height="1" fill="#c4c4c4"/><rect x="231.12" y="468.58" width="1" height="1" fill="#c4c4c4"/><rect x="243.46" y="468.58" width="1" height="1" fill="#c4c4c4"/><rect x="255.80" y="468.58" width="1" height="1" fill="#c4c4c4"/><rect x="268.14" y="468.58" width="1" height="1" fill="#c4c4c4"/><rect x="280.48" y="468.58" width="1" height="1" fill="#c4c4c4"/><rect x="292.82" y="468.58" width="1" height="1" fill="#c4c4c4"/><rect x="305.16" y="468.58" width="1" height="1" fill="#c4c4c4"/><rect x="317.50" y="468.58" width="1" height="1" fill="#c4c4c4"/><rect x="329.84" y="468.58" width="1" height="1" fill="#c4c4c4"/><rect x="342.18" y="468.58" width="1" height="1" fill="#c4c4c4"/><rect x="354.52" y="468.58" width="1" height="1" fill="#c4c4c4"/><rect x="366.86" y="468.58" width="1" height="1" fill="#c4c4c4"/><rect x="379.20" y="468.58" width="1" height="1" fill="#c4c4c4"/><rect x="391.54" y="468.58" width="1" height="1" fill="#c4c4c4"/><rect x="70.70" y="480.92" width="1" height="1" fill="#c4c4c4"/><rect x="83.04" y="480.92" width="1" height="1" fill="#c4c4c4"/><rect x="95.38" y="480.92" width="1" height="1" fill="#c4c4c4"/><rect x="107.72" y="480.92" width="1" height="1" fill="#c4c4c4"/><rect x="120.06" y="480.92" width="1" height="1" fill="#c4c4c4"/><rect x="132.40" y="480.92" width="1" height="1" fill="#c4c4c4"/><rect x="144.74" y="480.92" width="1" height="1" fill="#c4c4c4"/><rect x="157.08" y="480.92" width="1" height="1" fill="#c4c4c4"/><rect x="169.42" y="480.92" width="1" height="1" fill="#c4c4c4"/><rect x="181.76" y="480.92" width="1" height="1" fill="#c4c4c4"/><rect x="194.10" y="480.92" width="1" height="1" fill="#c4c4c4"/><rect x="206.44" y="480.92" width="1" height="1" fill="#c4c4c4"/><rect x="218.78" y="480.92" width="1" height="1" fill="#c4c4c4"/><rect x="231.12" y="480.92" width="1" height="1" fill="#c4c4c4"/><rect x="243.46" y="480.92" width="1" height="1" fill="#c4c4c4"/><rect x="255.80" y="480.92" width="1" height="1" fill="#c4c4c4"/><rect x="268.14" y="480.92" width="1" height="1" fill="#c4c4c4"/><rect x="280.48" y="480.92" width="1" height="1" fill="#c4c4c4"/><rect x="292.82" y="480.92" width="1" height="1" fill="#c4c4c4"/><rect x="305.16" y="480.92" width="1" height="1" fill="#c4c4c4"/><rect x="317.50" y="480.92" width="1" height="1" fill="#c4c4c4"/><rect x="329.84" y="480.92" width="1" height="1" fill="#c4c4c4"/><rect x="342.18" y="480.92" width="1" height="1" fill="#c4c4c4"/><rect x="354.52" y="480.92" width="1" height="1" fill="#c4c4c4"/><rect x="366.86" y="480.92" width="1" height="1" fill="#c4c4c4"/><rect x="379.20" y="480.92" width="1" height="1" fill="#c4c4c4"/><rect x="391.54" y="480.92" width="1" height="1" fill="#c4c4c4"/><rect x="70.70" y="493.26" width="1" height="1" fill="#c4c4c4"/><rect x="83.04" y="493.26" width="1" height="1" fill="#c4c4c4"/><rect x="95.38" y="493.26" width="1" height="1" fill="#c4c4c4"/><rect x="107.72" y="493.26" width="1" height="1" fill="#c4c4c4"/><rect x="120.06" y="493.26" width="1" height="1" fill="#c4c4c4"/><rect x="132.40" y="493.26" width="1" height="1" fill="#c4c4c4"/><rect x="144.74" y="493.26" width="1" height="1" fill="#c4c4c4"/><rect x="157.08" y="493.26" width="1" height="1" fill="#c4c4c4"/><rect x="169.42" y="493.26" width="1" height="1" fill="#c4c4c4"/><rect x="181.76" y="493.26" width="1" height="1" fill="#c4c4c4"/><rect x="194.10" y="493.26" width="1" height="1" fill="#c4c4c4"/><rect x="206.44" y="493.26" width="1" height="1" fill="#c4c4c4"/><rect x="218.78" y="493.26" width="1" height="1" fill="#c4c4c4"/><rect x="231.12" y="493.26" width="1" height="1" fill="#c4c4c4"/><rect x="243.46" y="493.26" width="1" height="1" fill="#c4c4c4"/><rect x="255.80" y="493.26" width="1" height="1" fill="#c4c4c4"/><rect x="268.14" y="493.26" width="1" height="1" fill="#c4c4c4"/><rect x="280.48" y="493.26" width="1" height="1" fill="#c4c4c4"/><rect x="292.82" y="493.26" width="1" height="1" fill="#c4c4c4"/><rect x="305.16" y="493.26" width="1" height="1" fill="#c4c4c4"/><rect x="317.50" y="493.26" width="1" height="1" fill="#c4c4c4"/><rect x="329.84" y="493.26" width="1" height="1" fill="#c4c4c4"/><rect x="342.18" y="493.26" width="1" height="1" fill="#c4c4c4"/><rect x="354.52" y="493.26" width="1" height="1" fill="#c4c4c4"/><rect x="366.86" y="493.26" width="1" height="1" fill="#c4c4c4"/><rect x="379.20" y="493.26" width="1" height="1" fill="#c4c4c4"/><rect x="391.54" y="493.26" width="1" height="1" fill="#c4c4c4"/><rect x="70.70" y="505.60" width="1" height="1" fill="#c4c4c4"/><rect x="83.04" y="505.60" width="1" height="1" fill="#c4c4c4"/><rect x="95.38" y="505.60" width="1" height="1" fill="#c4c4c4"/><rect x="107.72" y="505.60" width="1" height="1" fill="#c4c4c4"/><rect x="120.06" y="505.60" width="1" height="1" fill="#c4c4c4"/><rect x="132.40" y="505.60" width="1" height="1" fill="#c4c4c4"/><rect x="144.74" y="505.60" width="1" height="1" fill="#c4c4c4"/><rect x="157.08" y="505.60" width="1" height="1" fill="#c4c4c4"/><rect x="169.42" y="505.60" width="1" height="1" fill="#c4c4c4"/><rect x="181.76" y="505.60" width="1" height="1" fill="#c4c4c4"/><rect x="194.10" y="505.60" width="1" height="1" fill="#c4c4c4"/><rect x="206.44" y="505.60" width="1" height="1" fill="#c4c4c4"/><rect x="218.78" y="505.60" width="1" height="1" fill="#c4c4c4"/><rect x="231.12" y="505.60" width="1" height="1" fill="#c4c4c4"/><rect x="243.46" y="505.60" width="1" height="1" fill="#c4c4c4"/><rect x="255.80" y="505.60" width="1" height="1" fill="#c4c4c4"/><rect x="268.14" y="505.60" width="1" height="1" fill="#c4c4c4"/><rect x="280.48" y="505.60" width="1" height="1" fill="#c4c4c4"/><rect x="292.82" y="505.60" width="1" height="1" fill="#c4c4c4"/><rect x="305.16" y="505.60" width="1" height="1" fill="#c4c4c4"/><rect x="317.50" y="505.60" width="1" height="1" fill="#c4c4c4"/><rect x="329.84" y="505.60" width="1" height="1" fill="#c4c4c4"/><rect x="342.18" y="505.60" width="1" height="1" fill="#c4c4c4"/><rect x="354.52" y="505.60" width="1" height="1" fill="#c4c4c4"/><rect x="366.86" y="505.60" width="1" height="1" fill="#c4c4c4"/><rect x="379.20" y="505.60" width="1" height="1" fill="#c4c4c4"/><rect x="391.54" y="505.60" width="1" height="1" fill="#c4c4c4"/><rect x="70.70" y="517.94" width="1" height="1" fill="#c4c4c4"/><rect x="83.04" y="517.94" width="1" height="1" fill="#c4c4c4"/><rect x="95.38" y="517.94" width="1" height="1" fill="#c4c4c4"/><rect x="107.72" y="517.94" width="1" height="1" fill="#c4c4c4"/><rect x="120.06" y="517.94" width="1" height="1" fill="#c4c4c4"/><rect x="132.40" y="517.94" width="1" height="1" fill="#c4c4c4"/><rect x="144.74" y="517.94" width="1" height="1" fill="#c4c4c4"/><rect x="157.08" y="517.94" width="1" height="1" fill="#c4c4c4"/><rect x="169.42" y="517.94" width="1" height="1" fill="#c4c4c4"/><rect x="181.76" y="517.94" width="1" height="1" fill="#c4c4c4"/><rect x="194.10" y="517.94" width="1" height="1" fill="#c4c4c4"/><rect x="206.44" y="517.94" width="1" height="1" fill="#c4c4c4"/><rect x="218.78" y="517.94" width="1" height="1" fill="#c4c4c4"/><rect x="231.12" y="517.94" width="1" height="1" fill="#c4c4c4"/><rect x="243.46" y="517.94" width="1" height="1" fill="#c4c4c4"/><rect x="255.80" y="517.94" width="1" height="1" fill="#c4c4c4"/><rect x="268.14" y="517.94" width="1" height="1" fill="#c4c4c4"/><rect x="280.48" y="517.94" width="1" height="1" fill="#c4c4c4"/><rect x="292.82" y="517.94" width="1" height="1" fill="#c4c4c4"/><rect x="305.16" y="517.94" width="1" height="1" fill="#c4c4c4"/><rect x="317.50" y="517.94" width="1" height="1" fill="#c4c4c4"/><rect x="329.84" y="517.94" width="1" height="1" fill="#c4c4c4"/><rect x="342.18" y="517.94" width="1" height="1" fill="#c4c4c4"/><rect x="354.52" y="517.94" width="1" height="1" fill="#c4c4c4"/><rect x="366.86" y="517.94" width="1" height="1" fill="#c4c4c4"/><rect x="379.20" y="517.94" width="1" height="1" fill="#c4c4c4"/><rect x="391.54" y="517.94" width="1" height="1" fill="#c4c4c4"/><rect x="70.70" y="530.28" width="1" height="1" fill="#c4c4c4"/><rect x="83.04" y="530.28" width="1" height="1" fill="#c4c4c4"/><rect x="95.38" y="530.28" width="1" height="1" fill="#c4c4c4"/><rect x="107.72" y="530.28" width="1" height="1" fill="#c4c4c4"/><rect x="120.06" y="530.28" width="1" height="1" fill="#c4c4c4"/><rect x="132.40" y="530.28" width="1" height="1" fill="#c4c4c4"/><rect x="144.74" y="530.28" width="1" height="1" fill="#c4c4c4"/><rect x="157.08" y="530.28" width="1" height="1" fill="#c4c4c4"/><rect x="169.42" y="530.28" width="1" height="1" fill="#c4c4c4"/><rect x="181.76" y="530.28" width="1" height="1" fill="#c4c4c4"/><rect x="194.10" y="530.28" width="1" height="1" fill="#c4c4c4"/><rect x="206.44" y="530.28" width="1" height="1" fill="#c4c4c4"/><rect x="218.78" y="530.28" width="1" height="1" fill="#c4c4c4"/><rect x="231.12" y="530.28" width="1" height="1" fill="#c4c4c4"/><rect x="243.46" y="530.28" width="1" height="1" fill="#c4c4c4"/><rect x="255.80" y="530.28" width="1" height="1" fill="#c4c4c4"/><rect x="268.14" y="530.28" width="1" height="1" fill="#c4c4c4"/><rect x="280.48" y="530.28" width="1" height="1" fill="#c4c4c4"/><rect x="292.82" y="530.28" width="1" height="1" fill="#c4c4c4"/><rect x="305.16" y="530.28" width="1" height="1" fill="#c4c4c4"/><rect x="317.50" y="530.28" width="1" height="1" fill="#c4c4c4"/><rect x="329.84" y="530.28" width="1" height="1" fill="#c4c4c4"/><rect x="342.18" y="530.28" width="1" height="1" fill="#c4c4c4"/><rect x="354.52" y="530.28" width="1" height="1" fill="#c4c4c4"/><rect x="366.86" y="530.28" width="1" height="1" fill="#c4c4c4"/><rect x="379.20" y="530.28" width="1" height="1" fill="#c4c4c4"/><rect x="391.54" y="530.28" width="1" height="1" fill="#c4c4c4"/><rect x="70.70" y="542.62" width="1" height="1" fill="#c4c4c4"/><rect x="83.04" y="542.62" width="1" height="1" fill="#c4c4c4"/><rect x="95.38" y="542.62" width="1" height="1" fill="#c4c4c4"/><rect x="107.72" y="542.62" width="1" height="1" fill="#c4c4c4"/><rect x="120.06" y="542.62" width="1" height="1" fill="#c4c4c4"/><rect x="132.40" y="542.62" width="1" height="1" fill="#c4c4c4"/><rect x="144.74" y="542.62" width="1" height="1" fill="#c4c4c4"/><rect x="157.08" y="542.62" width="1" height="1" fill="#c4c4c4"/><rect x="169.42" y="542.62" width="1" height="1" fill="#c4c4c4"/><rect x="181.76" y="542.62" width="1" height="1" fill="#c4c4c4"/><rect x="194.10" y="542.62" width="1" height="1" fill="#c4c4c4"/><rect x="206.44" y="542.62" width="1" height="1" fill="#c4c4c4"/><rect x="218.78" y="542.62" width="1" height="1" fill="#c4c4c4"/><rect x="231.12" y="542.62" width="1" height="1" fill="#c4c4c4"/><rect x="243.46" y="542.62" width="1" height="1" fill="#c4c4c4"/><rect x="255.80" y="542.62" width="1" height="1" fill="#c4c4c4"/><rect x="268.14" y="542.62" width="1" height="1" fill="#c4c4c4"/><rect x="280.48" y="542.62" width="1" height="1" fill="#c4c4c4"/><rect x="292.82" y="542.62" width="1" height="1" fill="#c4c4c4"/><rect x="305.16" y="542.62" width="1" height="1" fill="#c4c4c4"/><rect x="317.50" y="542.62" width="1" height="1" fill="#c4c4c4"/><rect x="329.84" y="542.62" width="1" height="1" fill="#c4c4c4"/><rect x="342.18" y="542.62" width="1" height="1" fill="#c4c4c4"/><rect x="354.52" y="542.62" width="1" height="1" fill="#c4c4c4"/><rect x="366.86" y="542.62" width="1" height="1" fill="#c4c4c4"/><rect x="379.20" y="542.62" width="1" height="1" fill="#c4c4c4"/><rect x="391.54" y="542.62" width="1" height="1" fill="#c4c4c4"/><rect x="70.70" y="554.96" width="1" height="1" fill="#c4c4c4"/><rect x="83.04" y="554.96" width="1" height="1" fill="#c4c4c4"/><rect x="95.38" y="554.96" width="1" height="1" fill="#c4c4c4"/><rect x="107.72" y="554.96" width="1" height="1" fill="#c4c4c4"/><rect x="120.06" y="554.96" width="1" height="1" fill="#c4c4c4"/><rect x="132.40" y="554.96" width="1" height="1" fill="#c4c4c4"/><rect x="144.74" y="554.96" width="1" height="1" fill="#c4c4c4"/><rect x="157.08" y="554.96" width="1" height="1" fill="#c4c4c4"/><rect x="169.42" y="554.96" width="1" height="1" fill="#c4c4c4"/><rect x="181.76" y="554.96" width="1" height="1" fill="#c4c4c4"/><rect x="194.10" y="554.96" width="1" height="1" fill="#c4c4c4"/><rect x="206.44" y="554.96" width="1" height="1" fill="#c4c4c4"/><rect x="218.78" y="554.96" width="1" height="1" fill="#c4c4c4"/><rect x="231.12" y="554.96" width="1" height="1" fill="#c4c4c4"/><rect x="243.46" y="554.96" width="1" height="1" fill="#c4c4c4"/><rect x="255.80" y="554.96" width="1" height="1" fill="#c4c4c4"/><rect x="268.14" y="554.96" width="1" height="1" fill="#c4c4c4"/><rect x="280.48" y="554.96" width="1" height="1" fill="#c4c4c4"/><rect x="292.82" y="554.96" width="1" height="1" fill="#c4c4c4"/><rect x="305.16" y="554.96" width="1" height="1" fill="#c4c4c4"/><rect x="317.50" y="554.96" width="1" height="1" fill="#c4c4c4"/><rect x="329.84" y="554.96" width="1" height="1" fill="#c4c4c4"/><rect x="342.18" y="554.96" width="1" height="1" fill="#c4c4c4"/><rect x="354.52" y="554.96" width="1" height="1" fill="#c4c4c4"/><rect x="366.86" y="554.96" width="1" height="1" fill="#c4c4c4"/><rect x="379.20" y="554.96" width="1" height="1" fill="#c4c4c4"/><rect x="391.54" y="554.96" width="1" height="1" fill="#c4c4c4"/><rect x="70.70" y="567.30" width="1" height="1" fill="#c4c4c4"/><rect x="83.04" y="567.30" width="1" height="1" fill="#c4c4c4"/><rect x="95.38" y="567.30" width="1" height="1" fill="#c4c4c4"/><rect x="107.72" y="567.30" width="1" height="1" fill="#c4c4c4"/><rect x="120.06" y="567.30" width="1" height="1" fill="#c4c4c4"/><rect x="132.40" y="567.30" width="1" height="1" fill="#c4c4c4"/><rect x="144.74" y="567.30" width="1" height="1" fill="#c4c4c4"/><rect x="157.08" y="567.30" width="1" height="1" fill="#c4c4c4"/><rect x="169.42" y="567.30" width="1" height="1" fill="#c4c4c4"/><rect x="181.76" y="567.30" width="1" height="1" fill="#c4c4c4"/><rect x="194.10" y="567.30" width="1" height="1" fill="#c4c4c4"/><rect x="206.44" y="567.30" width="1" height="1" fill="#c4c4c4"/><rect x="218.78" y="567.30" width="1" height="1" fill="#c4c4c4"/><rect x="231.12" y="567.30" width="1" height="1" fill="#c4c4c4"/><rect x="243.46" y="567.30" width="1" height="1" fill="#c4c4c4"/><rect x="255.80" y="567.30" width="1" height="1" fill="#c4c4c4"/><rect x="268.14" y="567.30" width="1" height="1" fill="#c4c4c4"/><rect x="280.48" y="567.30" width="1" height="1" fill="#c4c4c4"/><rect x="292.82" y="567.30" width="1" height="1" fill="#c4c4c4"/><rect x="305.16" y="567.30" width="1" height="1" fill="#c4c4c4"/><rect x="317.50" y="567.30" width="1" height="1" fill="#c4c4c4"/><rect x="329.84" y="567.30" width="1" height="1" fill="#c4c4c4"/><rect x="342.18" y="567.30" width="1" height="1" fill="#c4c4c4"/><rect x="354.52" y="567.30" width="1" height="1" fill="#c4c4c4"/><rect x="366.86" y="567.30" width="1" height="1" fill="#c4c4c4"/><rect x="379.20" y="567.30" width="1" height="1" fill="#c4c4c4"/><rect x="391.54" y="567.30" width="1" height="1" fill="#c4c4c4"/><rect x="70.70" y="579.64" width="1" height="1" fill="#c4c4c4"/><rect x="83.04" y="579.64" width="1" height="1" fill="#c4c4c4"/><rect x="95.38" y="579.64" width="1" height="1" fill="#c4c4c4"/><rect x="107.72" y="579.64" width="1" height="1" fill="#c4c4c4"/><rect x="120.06" y="579.64" width="1" height="1" fill="#c4c4c4"/><rect x="132.40" y="579.64" width="1" height="1" fill="#c4c4c4"/><rect x="144.74" y="579.64" width="1" height="1" fill="#c4c4c4"/><rect x="157.08" y="579.64" width="1" height="1" fill="#c4c4c4"/><rect x="169.42" y="579.64" width="1" height="1" fill="#c4c4c4"/><rect x="181.76" y="579.64" width="1" height="1" fill="#c4c4c4"/><rect x="194.10" y="579.64" width="1" height="1" fill="#c4c4c4"/><rect x="206.44" y="579.64" width="1" height="1" fill="#c4c4c4"/><rect x="218.78" y="579.64" width="1" height="1" fill="#c4c4c4"/><rect x="231.12" y="579.64" width="1" height="1" fill="#c4c4c4"/><rect x="243.46" y="579.64" width="1" height="1" fill="#c4c4c4"/><rect x="255.80" y="579.64" width="1" height="1" fill="#c4c4c4"/><rect x="268.14" y="579.64" width="1" height="1" fill="#c4c4c4"/><rect x="280.48" y="579.64" width="1" height="1" fill="#c4c4c4"/><rect x="292.82" y="579.64" width="1" height="1" fill="#c4c4c4"/><rect x="305.16" y="579.64" width="1" height="1" fill="#c4c4c4"/><rect x="317.50" y="579.64" width="1" height="1" fill="#c4c4c4"/><rect x="329.84" y="579.64" width="1" height="1" fill="#c4c4c4"/><rect x="342.18" y="579.64" width="1" height="1" fill="#c4c4c4"/><rect x="354.52" y="579.64" width="1" height="1" fill="#c4c4c4"/><rect x="366.86" y="579.64" width="1" height="1" fill="#c4c4c4"/><rect x="379.20" y="579.64" width="1" height="1" fill="#c4c4c4"/><rect x="391.54" y="579.64" width="1" height="1" fill="#c4c4c4"/><rect x="70.70" y="591.98" width="1" height="1" fill="#c4c4c4"/><rect x="83.04" y="591.98" width="1" height="1" fill="#c4c4c4"/><rect x="95.38" y="591.98" width="1" height="1" fill="#c4c4c4"/><rect x="107.72" y="591.98" width="1" height="1" fill="#c4c4c4"/><rect x="120.06" y="591.98" width="1" height="1" fill="#c4c4c4"/><rect x="132.40" y="591.98" width="1" height="1" fill="#c4c4c4"/><rect x="144.74" y="591.98" width="1" height="1" fill="#c4c4c4"/><rect x="157.08" y="591.98" width="1" height="1" fill="#c4c4c4"/><rect x="169.42" y="591.98" width="1" height="1" fill="#c4c4c4"/><rect x="181.76" y="591.98" width="1" height="1" fill="#c4c4c4"/><rect x="194.10" y="591.98" width="1" height="1" fill="#c4c4c4"/><rect x="206.44" y="591.98" width="1" height="1" fill="#c4c4c4"/><rect x="218.78" y="591.98" width="1" height="1" fill="#c4c4c4"/><rect x="231.12" y="591.98" width="1" height="1" fill="#c4c4c4"/><rect x="243.46" y="591.98" width="1" height="1" fill="#c4c4c4"/><rect x="255.80" y="591.98" width="1" height="1" fill="#c4c4c4"/><rect x="268.14" y="591.98" width="1" height="1" fill="#c4c4c4"/><rect x="280.48" y="591.98" width="1" height="1" fill="#c4c4c4"/><rect x="292.82" y="591.98" width="1" height="1" fill="#c4c4c4"/><rect x="305.16" y="591.98" width="1" height="1" fill="#c4c4c4"/><rect x="317.50" y="591.98" width="1" height="1" fill="#c4c4c4"/><rect x="329.84" y="591.98" width="1" height="1" fill="#c4c4c4"/><rect x="342.18" y="591.98" width="1" height="1" fill="#c4c4c4"/><rect x="354.52" y="591.98" width="1" height="1" fill="#c4c4c4"/><rect x="366.86" y="591.98" width="1" height="1" fill="#c4c4c4"/><rect x="379.20" y="591.98" width="1" height="1" fill="#c4c4c4"/><rect x="391.54" y="591.98" width="1" height="1" fill="#c4c4c4"/><rect x="70.70" y="604.32" width="1" height="1" fill="#c4c4c4"/><rect x="83.04" y="604.32" width="1" height="1" fill="#c4c4c4"/><rect x="95.38" y="604.32" width="1" height="1" fill="#c4c4c4"/><rect x="107.72" y="604.32" width="1" height="1" fill="#c4c4c4"/><rect x="120.06" y="604.32" width="1" height="1" fill="#c4c4c4"/><rect x="132.40" y="604.32" width="1" height="1" fill="#c4c4c4"/><rect x="144.74" y="604.32" width="1" height="1" fill="#c4c4c4"/><rect x="157.08" y="604.32" width="1" height="1" fill="#c4c4c4"/><rect x="169.42" y="604.32" width="1" height="1" fill="#c4c4c4"/><rect x="181.76" y="604.32" width="1" height="1" fill="#c4c4c4"/><rect x="194.10" y="604.32" width="1" height="1" fill="#c4c4c4"/><rect x="206.44" y="604.32" width="1" height="1" fill="#c4c4c4"/><rect x="218.78" y="604.32" width="1" height="1" fill="#c4c4c4"/><rect x="231.12" y="604.32" width="1" height="1" fill="#c4c4c4"/><rect x="243.46" y="604.32" width="1" height="1" fill="#c4c4c4"/><rect x="255.80" y="604.32" width="1" height="1" fill="#c4c4c4"/><rect x="268.14" y="604.32" width="1" height="1" fill="#c4c4c4"/><rect x="280.48" y="604.32" width="1" height="1" fill="#c4c4c4"/><rect x="292.82" y="604.32" width="1" height="1" fill="#c4c4c4"/><rect x="305.16" y="604.32" width="1" height="1" fill="#c4c4c4"/><rect x="317.50" y="604.32" width="1" height="1" fill="#c4c4c4"/><rect x="329.84" y="604.32" width="1" height="1" fill="#c4c4c4"/><rect x="342.18" y="604.32" width="1" height="1" fill="#c4c4c4"/><rect x="354.52" y="604.32" width="1" height="1" fill="#c4c4c4"/><rect x="366.86" y="604.32" width="1" height="1" fill="#c4c4c4"/><rect x="379.20" y="604.32" width="1" height="1" fill="#c4c4c4"/><rect x="391.54" y="604.32" width="1" height="1" fill="#c4c4c4"/><rect x="70.70" y="616.66" width="1" height="1" fill="#c4c4c4"/><rect x="83.04" y="616.66" width="1" height="1" fill="#c4c4c4"/><rect x="95.38" y="616.66" width="1" height="1" fill="#c4c4c4"/><rect x="107.72" y="616.66" width="1" height="1" fill="#c4c4c4"/><rect x="120.06" y="616.66" width="1" height="1" fill="#c4c4c4"/><rect x="132.40" y="616.66" width="1" height="1" fill="#c4c4c4"/><rect x="144.74" y="616.66" width="1" height="1" fill="#c4c4c4"/><rect x="157.08" y="616.66" width="1" height="1" fill="#c4c4c4"/><rect x="169.42" y="616.66" width="1" height="1" fill="#c4c4c4"/><rect x="181.76" y="616.66" width="1" height="1" fill="#c4c4c4"/><rect x="194.10" y="616.66" width="1" height="1" fill="#c4c4c4"/><rect x="206.44" y="616.66" width="1" height="1" fill="#c4c4c4"/><rect x="218.78" y="616.66" width="1" height="1" fill="#c4c4c4"/><rect x="231.12" y="616.66" width="1" height="1" fill="#c4c4c4"/><rect x="243.46" y="616.66" width="1" height="1" fill="#c4c4c4"/><rect x="255.80" y="616.66" width="1" height="1" fill="#c4c4c4"/><rect x="268.14" y="616.66" width="1" height="1" fill="#c4c4c4"/><rect x="280.48" y="616.66" width="1" height="1" fill="#c4c4c4"/><rect x="292.82" y="616.66" width="1" height="1" fill="#c4c4c4"/><rect x="305.16" y="616.66" width="1" height="1" fill="#c4c4c4"/><rect x="317.50" y="616.66" width="1" height="1" fill="#c4c4c4"/><rect x="329.84" y="616.66" width="1" height="1" fill="#c4c4c4"/><rect x="342.18" y="616.66" width="1" height="1" fill="#c4c4c4"/><rect x="354.52" y="616.66" width="1" height="1" fill="#c4c4c4"/><rect x="366.86" y="616.66" width="1" height="1" fill="#c4c4c4"/><rect x="379.20" y="616.66" width="1" height="1" fill="#c4c4c4"/><rect x="391.54" y="616.66" width="1" height="1" fill="#c4c4c4"/><rect x="70.70" y="629.00" width="1" height="1" fill="#c4c4c4"/><rect x="83.04" y="629.00" width="1" height="1" fill="#c4c4c4"/><rect x="95.38" y="629.00" width="1" height="1" fill="#c4c4c4"/><rect x="107.72" y="629.00" width="1" height="1" fill="#c4c4c4"/><rect x="120.06" y="629.00" width="1" height="1" fill="#c4c4c4"/><rect x="132.40" y="629.00" width="1" height="1" fill="#c4c4c4"/><rect x="144.74" y="629.00" width="1" height="1" fill="#c4c4c4"/><rect x="157.08" y="629.00" width="1" height="1" fill="#c4c4c4"/><rect x="169.42" y="629.00" width="1" height="1" fill="#c4c4c4"/><rect x="181.76" y="629.00" width="1" height="1" fill="#c4c4c4"/><rect x="194.10" y="629.00" width="1" height="1" fill="#c4c4c4"/><rect x="206.44" y="629.00" width="1" height="1" fill="#c4c4c4"/><rect x="218.78" y="629.00" width="1" height="1" fill="#c4c4c4"/><rect x="231.12" y="629.00" width="1" height="1" fill="#c4c4c4"/><rect x="243.46" y="629.00" width="1" height="1" fill="#c4c4c4"/><rect x="255.80" y="629.00" width="1" height="1" fill="#c4c4c4"/><rect x="268.14" y="629.00" width="1" height="1" fill="#c4c4c4"/><rect x="280.48" y="629.00" width="1" height="1" fill="#c4c4c4"/><rect x="292.82" y="629.00" width="1" height="1" fill="#c4c4c4"/><rect x="305.16" y="629.00" width="1" height="1" fill="#c4c4c4"/><rect x="317.50" y="629.00" width="1" height="1" fill="#c4c4c4"/><rect x="329.84" y="629.00" width="1" height="1" fill="#c4c4c4"/><rect x="342.18" y="629.00" width="1" height="1" fill="#c4c4c4"/><rect x="354.52" y="629.00" width="1" height="1" fill="#c4c4c4"/><rect x="366.86" y="629.00" width="1" height="1" fill="#c4c4c4"/><rect x="379.20" y="629.00" width="1" height="1" fill="#c4c4c4"/><rect x="391.54" y="629.00" width="1" height="1" fill="#c4c4c4"/><rect x="70.70" y="641.34" width="1" height="1" fill="#c4c4c4"/><rect x="83.04" y="641.34" width="1" height="1" fill="#c4c4c4"/><rect x="95.38" y="641.34" width="1" height="1" fill="#c4c4c4"/><rect x="107.72" y="641.34" width="1" height="1" fill="#c4c4c4"/><rect x="120.06" y="641.34" width="1" height="1" fill="#c4c4c4"/><rect x="132.40" y="641.34" width="1" height="1" fill="#c4c4c4"/><rect x="144.74" y="641.34" width="1" height="1" fill="#c4c4c4"/><rect x="157.08" y="641.34" width="1" height="1" fill="#c4c4c4"/><rect x="169.42" y="641.34" width="1" height="1" fill="#c4c4c4"/><rect x="181.76" y="641.34" width="1" height="1" fill="#c4c4c4"/><rect x="194.10" y="641.34" width="1" height="1" fill="#c4c4c4"/><rect x="206.44" y="641.34" width="1" height="1" fill="#c4c4c4"/><rect x="218.78" y="641.34" width="1" height="1" fill="#c4c4c4"/><rect x="231.12" y="641.34" width="1" height="1" fill="#c4c4c4"/><rect x="243.46" y="641.34" width="1" height="1" fill="#c4c4c4"/><rect x="255.80" y="641.34" width="1" height="1" fill="#c4c4c4"/><rect x="268.14" y="641.34" width="1" height="1" fill="#c4c4c4"/><rect x="280.48" y="641.34" width="1" height="1" fill="#c4c4c4"/><rect x="292.82" y="641.34" width="1" height="1" fill="#c4c4c4"/><rect x="305.16" y="641.34" width="1" height="1" fill="#c4c4c4"/><rect x="317.50" y="641.34" width="1" height="1" fill="#c4c4c4"/><rect x="329.84" y="641.34" width="1" height="1" fill="#c4c4c4"/><rect x="342.18" y="641.34" width="1" height="1" fill="#c4c4c4"/><rect x="354.52" y="641.34" width="1" height="1" fill="#c4c4c4"/><rect x="366.86" y="641.34" width="1" height="1" fill="#c4c4c4"/><rect x="379.20" y="641.34" width="1" height="1" fill="#c4c4c4"/><rect x="391.54" y="641.34" width="1" height="1" fill="#c4c4c4"/><rect x="78.5" y="209" width="296.3" height="410" fill="none" stroke="#7a7a7a" stroke-width="1" stroke-dasharray="3 1"/><circle cx="78.5" cy="209" r="2.9" fill="#bdbdbd" stroke="#5a5a5a" stroke-width="1.1"/><circle cx="226.8" cy="209" r="2.9" fill="#bdbdbd" stroke="#5a5a5a" stroke-width="1.1"/><circle cx="374.8" cy="209" r="2.9" fill="#bdbdbd" stroke="#5a5a5a" stroke-width="1.1"/><circle cx="78.5" cy="414" r="2.9" fill="#bdbdbd" stroke="#5a5a5a" stroke-width="1.1"/><circle cx="374.8" cy="414" r="2.9" fill="#bdbdbd" stroke="#5a5a5a" stroke-width="1.1"/><circle cx="78.5" cy="619" r="2.9" fill="#bdbdbd" stroke="#5a5a5a" stroke-width="1.1"/><circle cx="226.8" cy="619" r="2.9" fill="#bdbdbd" stroke="#5a5a5a" stroke-width="1.1"/><circle cx="374.8" cy="619" r="2.9" fill="#bdbdbd" stroke="#5a5a5a" stroke-width="1.1"/><path d="M212 308 C200 292 178 280 147 279 C118 280 96 296 91 327 C88 350 96 375 112 390 C120 397 128 402 131 406 C118 418 98 432 91 455 C86 480 98 505 126 516 C150 526 185 524 206 510 C220 500 230 480 230 466 L228 340 Z" fill="#1f211f" stroke="#bbb" stroke-width="0.6" stroke-dasharray="1.5 1.5"/><path d="M210 312.5 C198 297 177 283.5 147 283 C122 285 102.5 300 98 327 C95.5 350 102.5 370 117 384 C124 393 133 399 137 407 C124 419 105 434 98 457 C95 478 105 497 128 507 C152 515 184 514 202 502 C215 493 219 478 220 466 L217 340 Z" fill="#fad900" stroke="#fff6c8" stroke-width="0.7"/><path d="M240 312 C250 298 272 282 305 278 C335 280 356 298 362 330 C364 355 352 385 336 399 C332 403 328 406 325 408 C345 418 362 440 365 468 C364 495 340 518 300 524 C268 524 245 512 235 490 C229 482 226 477 226 476 L226 472 L226 336 Z" fill="#1f211f" stroke="#bbb" stroke-width="0.6" stroke-dasharray="1.5 1.5"/><path d="M227.5 477.5 C225 481 221.5 489 218.5 500 C226 501 233 501 240.5 500 C237 489 230.5 481 227.5 477.5 Z" fill="#fdfdfd"/><path d="M227.5 336 C214 360 213 440 227.5 477 C242 440 241 360 227.5 336 Z" fill="#1f211f"/><path d="M227.5 341.5 C225 346 222 352 221.5 357.5 L233.5 357.5 C233 352 230 346 227.5 341.5 Z" fill="#d81f3e" stroke="#f4f4f4" stroke-width="0.9"/><rect x="218.68" y="360" width="17.65" height="10" rx="1.2" fill="#d81f3e" stroke="#f4f4f4" stroke-width="0.9"/><rect x="217.70" y="372.5" width="19.59" height="10.5" rx="1.2" fill="#d81f3e" stroke="#f4f4f4" stroke-width="0.9"/><rect x="217.14" y="385.5" width="20.71" height="9.5" rx="1.2" fill="#d81f3e" stroke="#f4f4f4" stroke-width="0.9"/><rect x="216.91" y="397.5" width="21.18" height="10.0" rx="1.2" fill="#d81f3e" stroke="#f4f4f4" stroke-width="0.9"/><rect x="216.97" y="410" width="21.05" height="9.5" rx="1.2" fill="#d81f3e" stroke="#f4f4f4" stroke-width="0.9"/><rect x="217.35" y="422.5" width="20.31" height="9.5" rx="1.2" fill="#d81f3e" stroke="#f4f4f4" stroke-width="0.9"/><rect x="218.14" y="435.5" width="18.72" height="10.5" rx="1.2" fill="#d81f3e" stroke="#f4f4f4" stroke-width="0.9"/><rect x="219.43" y="449" width="16.14" height="10" rx="1.2" fill="#d81f3e" stroke="#f4f4f4" stroke-width="0.9"/><rect x="221.40" y="462" width="12.21" height="9" rx="1.2" fill="#d81f3e" stroke="#f4f4f4" stroke-width="0.9"/><circle cx="142.5" cy="316.2" r="13.5" fill="#1f211f" stroke="#fff5c0" stroke-width="0.7" stroke-dasharray="1.5 1"/><circle cx="185.6" cy="318.9" r="6.8" fill="#1f211f" stroke="#fff5c0" stroke-width="0.7" stroke-dasharray="1.5 1"/><circle cx="136.6" cy="365.6" r="7.2" fill="#1f211f" stroke="#fff5c0" stroke-width="0.7" stroke-dasharray="1.5 1"/><circle cx="186.1" cy="362.9" r="13.5" fill="#1f211f" stroke="#fff5c0" stroke-width="0.7" stroke-dasharray="1.5 1"/><circle cx="195" cy="402.5" r="6.7" fill="#1f211f" stroke="#fff5c0" stroke-width="0.7" stroke-dasharray="1.5 1"/><circle cx="152" cy="433" r="7" fill="#1f211f" stroke="#fff5c0" stroke-width="0.7" stroke-dasharray="1.5 1"/><circle cx="186.4" cy="440" r="13.6" fill="#1f211f" stroke="#fff5c0" stroke-width="0.7" stroke-dasharray="1.5 1"/><circle cx="128" cy="468" r="13.6" fill="#1f211f" stroke="#fff5c0" stroke-width="0.7" stroke-dasharray="1.5 1"/><circle cx="175.6" cy="488" r="7" fill="#1f211f" stroke="#fff5c0" stroke-width="0.7" stroke-dasharray="1.5 1"/><circle cx="266.2" cy="324" r="7.2" fill="#2a7d52" stroke="#e8f0e8" stroke-width="1" stroke-dasharray="2 0.7"/><circle cx="311.6" cy="319.6" r="13.9" fill="#2a7d52" stroke="#e8f0e8" stroke-width="1" stroke-dasharray="2 0.7"/><circle cx="270" cy="365.2" r="13.9" fill="#2a7d52" stroke="#e8f0e8" stroke-width="1" stroke-dasharray="2 0.7"/><circle cx="317.2" cy="370.1" r="7.2" fill="#2a7d52" stroke="#e8f0e8" stroke-width="1" stroke-dasharray="2 0.7"/><circle cx="257" cy="401.5" r="6.8" fill="#2a7d52" stroke="#e8f0e8" stroke-width="1" stroke-dasharray="2 0.7"/><circle cx="269" cy="441" r="14.2" fill="#2a7d52" stroke="#e8f0e8" stroke-width="1" stroke-dasharray="2 0.7"/><circle cx="312.4" cy="429.6" r="7.3" fill="#2a7d52" stroke="#e8f0e8" stroke-width="1" stroke-dasharray="2 0.7"/><circle cx="321" cy="476.4" r="14.2" fill="#2a7d52" stroke="#e8f0e8" stroke-width="1" stroke-dasharray="2 0.7"/><circle cx="271" cy="491" r="7.3" fill="#2a7d52" stroke="#e8f0e8" stroke-width="1" stroke-dasharray="2 0.7"/><path d="M225.3 306 L224.7 277 C222 268 214 263 205 262.7 C197 263 193 270 193.5 277 C195 283 203 285 208 281 C211 278 210 272 205 272" fill="none" stroke="#1f211f" stroke-width="3.6" stroke-linecap="round"/><circle cx="204.7" cy="275.5" r="3.2" fill="#1f211f"/><path d="M224.7 277 C227 268 236 263 246 262 C253 262.5 256.5 270 256.5 276 C255 282 248 284 243 280 C240 276 243 272 248 273.5" fill="none" stroke="#1f211f" stroke-width="3.6" stroke-linecap="round"/><circle cx="225.6" cy="322" r="16.2" fill="#f4f4f4" stroke="#333" stroke-width="0.8"/><circle cx="225.6" cy="322" r="14.8" fill="#1e95dc"/><circle cx="220.4" cy="318" r="1.6" fill="none" stroke="#dfefff" stroke-width="0.9"/><circle cx="233" cy="318" r="1.6" fill="none" stroke="#dfefff" stroke-width="0.9"/><path d="M222 328 Q226.5 331.5 231.3 328" fill="none" stroke="#16334a" stroke-width="2"/><path d="M268.4 233.2 L272.8 241.6 L278.4 232.8 L283.6 238 L284.8 225.2 L290.4 230 L293.6 218 L297.6 228.4 L303.2 226 L307.2 234 L313.6 230 L318.4 238.8 L323.2 242 L312 246 L307.2 252.4 L301.6 258.8 L294.4 263.6 L285.6 266 L276 254 L271.2 246 Z" fill="#1a8fdb"/><path d="M300 240 L312 252 M305 236 L316 245" stroke="#fff" stroke-width="0.7" opacity="0.7"/><polyline points="113.75,562.5 117.5,546 133.75,556 151,543.75 155,565" fill="none" stroke="#3b9fcf" stroke-width="1.5" stroke-dasharray="2.5 0.7" stroke-linejoin="round" stroke-linecap="round"/><polyline points="158.75,565 166.25,541.25 177.5,562.5" fill="none" stroke="#3b9fcf" stroke-width="1.5" stroke-dasharray="2.5 0.7" stroke-linejoin="round" stroke-linecap="round"/><polyline points="161,556 173.75,555" fill="none" stroke="#3b9fcf" stroke-width="1.5" stroke-dasharray="2.5 0.7" stroke-linejoin="round" stroke-linecap="round"/><polyline points="178.75,561 180,540 190,541 191.25,548.75 181.25,552.5" fill="none" stroke="#3b9fcf" stroke-width="1.5" stroke-dasharray="2.5 0.7" stroke-linejoin="round" stroke-linecap="round"/><polyline points="191.25,542.5 197.5,557.5 203.75,545" fill="none" stroke="#3b9fcf" stroke-width="1.5" stroke-dasharray="2.5 0.7" stroke-linejoin="round" stroke-linecap="round"/><polyline points="210,542.5 212.5,558.75" fill="none" stroke="#3b9fcf" stroke-width="1.5" stroke-dasharray="2.5 0.7" stroke-linejoin="round" stroke-linecap="round"/><polyline points="206,542 215,541" fill="none" stroke="#3b9fcf" stroke-width="1.5" stroke-dasharray="2.5 0.7" stroke-linejoin="round" stroke-linecap="round"/><polyline points="206,558 216,558" fill="none" stroke="#3b9fcf" stroke-width="1.5" stroke-dasharray="2.5 0.7" stroke-linejoin="round" stroke-linecap="round"/><polyline points="220,557.5 225,538.75 235,552.5 243.75,537.5 247.5,557.5" fill="none" stroke="#3b9fcf" stroke-width="1.5" stroke-dasharray="2.5 0.7" stroke-linejoin="round" stroke-linecap="round"/><polyline points="247.5,557.5 255,541.25 262.5,562.5" fill="none" stroke="#3b9fcf" stroke-width="1.5" stroke-dasharray="2.5 0.7" stroke-linejoin="round" stroke-linecap="round"/><polyline points="250,553 260,552" fill="none" stroke="#3b9fcf" stroke-width="1.5" stroke-dasharray="2.5 0.7" stroke-linejoin="round" stroke-linecap="round"/><polyline points="265,562.5 267.5,542.5 280,545 277.5,553.75 270,553.75 281.25,565" fill="none" stroke="#3b9fcf" stroke-width="1.5" stroke-dasharray="2.5 0.7" stroke-linejoin="round" stroke-linecap="round"/><polyline points="281.25,560 287.5,546.25 295,557.5" fill="none" stroke="#3b9fcf" stroke-width="1.5" stroke-dasharray="2.5 0.7" stroke-linejoin="round" stroke-linecap="round"/><polyline points="151.25,601.25 152.5,586.25 165,600 168.75,587.5" fill="none" stroke="#3b9fcf" stroke-width="1.5" stroke-dasharray="2.5 0.7" stroke-linejoin="round" stroke-linecap="round"/><polyline points="171.25,600 177.5,590 182.5,600" fill="none" stroke="#3b9fcf" stroke-width="1.5" stroke-dasharray="2.5 0.7" stroke-linejoin="round" stroke-linecap="round"/><polyline points="173.5,596 181,595.5" fill="none" stroke="#3b9fcf" stroke-width="1.5" stroke-dasharray="2.5 0.7" stroke-linejoin="round" stroke-linecap="round"/><polyline points="187.5,601.25 190,583.75 205,581.25 210,593.75 202.5,602.5 187.5,601" fill="none" stroke="#3b9fcf" stroke-width="1.5" stroke-dasharray="2.5 0.7" stroke-linejoin="round" stroke-linecap="round"/><polyline points="221.25,586.25 222.5,607.5" fill="none" stroke="#3b9fcf" stroke-width="1.5" stroke-dasharray="2.5 0.7" stroke-linejoin="round" stroke-linecap="round"/><polyline points="215,586 230,585" fill="none" stroke="#3b9fcf" stroke-width="1.5" stroke-dasharray="2.5 0.7" stroke-linejoin="round" stroke-linecap="round"/><polyline points="212.5,606 232.5,607.5" fill="none" stroke="#3b9fcf" stroke-width="1.5" stroke-dasharray="2.5 0.7" stroke-linejoin="round" stroke-linecap="round"/><polyline points="271.25,610 267.5,576.25 285,593.75 297.5,576.25 302.5,610" fill="none" stroke="#3b9fcf" stroke-width="1.5" stroke-dasharray="2.5 0.7" stroke-linejoin="round" stroke-linecap="round"/><polyline points="304,610 314,588 332,604" fill="none" stroke="#3b9fcf" stroke-width="1.5" stroke-dasharray="2.5 0.7" stroke-linejoin="round" stroke-linecap="round"/><polyline points="308,598 325,596" fill="none" stroke="#3b9fcf" stroke-width="1.5" stroke-dasharray="2.5 0.7" stroke-linejoin="round" stroke-linecap="round"/></svg>
<div class="t" style="left:43.50px;top:177.00px;font-size:6.96px;color:#333;transform:scaleX(1.0660);transform-origin:0 0;">cm</div><div class="t" style="left:105.00px;top:175.00px;font-size:7.97px;color:#d03040;transform:scaleX(0.8364);transform-origin:0 0;">10</div><div class="t" style="left:231.00px;top:175.00px;font-size:7.25px;color:#333;transform:scaleX(0.7957);transform-origin:0 0;">0</div><div class="t" style="left:351.00px;top:175.00px;font-size:7.25px;color:#333;transform:scaleX(0.8703);transform-origin:0 0;">10</div><div class="t" style="left:45px;top:301px;font-size:8.5px;color:#333;transform:rotate(-90deg);transform-origin:0 0">10</div><div class="t" style="left:45px;top:422px;font-size:8.5px;color:#333;transform:rotate(-90deg);transform-origin:0 0">0</div><div class="t" style="left:45px;top:547px;font-size:8.5px;color:#d03040;transform:rotate(-90deg);transform-origin:0 0">10</div><div class="t" style="left:434.00px;top:180.00px;font-size:8.99px;color:#444;transform:scaleX(0.9564);transform-origin:0 0;">Do</div><div class="t" style="left:477.30px;top:346.00px;font-size:8.41px;color:#0c1c3c;transform:scaleX(0.9756);transform-origin:0 0;">183 - Vector</div><div class="t" style="left:477.30px;top:361.00px;font-size:8.41px;color:#0c1c3c;transform:scaleX(0.9756);transform-origin:0 0;">184 - Vector</div><div class="t" style="left:477.30px;top:375.00px;font-size:8.41px;color:#0c1c3c;transform:scaleX(0.9756);transform-origin:0 0;">185 - Vector</div><div class="t" style="left:477.30px;top:389.00px;font-size:8.41px;color:#0c1c3c;transform:scaleX(0.9756);transform-origin:0 0;">186 - Vector</div><div class="t" style="left:477.30px;top:404.00px;font-size:8.41px;color:#0c1c3c;transform:scaleX(0.9756);transform-origin:0 0;">187 - Vector</div><div class="t" style="left:434.25px;top:430.00px;font-size:10.14px;color:#444;transform:scaleX(0.8672);transform-origin:0 0;">Object Inspector: Objects</div><div class="t" style="left:571.00px;top:553.00px;font-size:10.00px;color:#555;transform:scaleX(0.8615);transform-origin:0 0;">No info to show</div><div class="t" style="left:790.7px;top:185.5px;font-size:10.5px;color:#3a3a3a;transform:rotate(90deg) scaleX(0.903);transform-origin:0 0">Object Manager</div><div class="t" style="left:653.75px;top:673.00px;font-size:10.87px;color:#222;transform:scaleX(0.7799);transform-origin:0 0;">Speed</div><div class="t" style="left:712.50px;top:674.00px;font-size:10.87px;color:#222;transform:scaleX(0.7581);transform-origin:0 0;">1.000 SPM</div><div class="t" style="left:58.25px;top:695.00px;font-size:9.86px;color:#333;transform:scaleX(0.8450);transform-origin:0 0;">124,0; 106,0 mm</div><div class="t" style="left:132.50px;top:695.00px;font-size:9.86px;color:#333;transform:scaleX(0.8527);transform-origin:0 0;">187 Vector(s)</div><div class="t" style="left:760.75px;top:696.00px;font-size:9.13px;color:#222;transform:scaleX(0.8887);transform-origin:0 0;">41 %</div>
<div class="a" style="left:445px;top:107px;width:168px;height:242px;background:#fdfdfd;border:1px solid #c9c9c9;box-shadow:2px 2px 4px rgba(0,0,0,0.22)"></div><svg class="a" style="left:0;top:0" width="800" height="712" viewBox="0 0 800 712"><rect x="446" y="107.5" width="166" height="47.5" fill="#cecece"/><rect x="487.5" y="202" width="123" height="1" fill="#e2e2e2"/><rect x="488" y="299" width="122" height="1" fill="#e2e2e2"/><rect x="452" y="124.3" width="3.8" height="1.1" fill="#c05070"/><rect x="452" y="127.0" width="3.8" height="1.1" fill="#c05070"/><rect x="452" y="129.7" width="3.8" height="1.1" fill="#c05070"/><rect x="452" y="132.4" width="3.8" height="1.1" fill="#c05070"/><rect x="452" y="135.1" width="3.8" height="1.1" fill="#c05070"/><circle cx="463.7" cy="135.3" r="5" fill="#f28cb8"/><rect x="460.4" y="122" width="6.2" height="6.2" fill="#f4f4f4" stroke="#7a3040" stroke-width="0.9" transform="rotate(45 463.5 125.1)"/><path d="M472.3 128 L475.3 139.5" stroke="#666" stroke-width="1.2"/><rect x="469.3" y="122" width="6.5" height="6.5" fill="#e8e000"/><path d="M469.3 122 L475.8 128.5 M475.8 122 L469.3 128.5 M472.55 121.5 L472.55 129 M468.8 125.25 L476.3 125.25" stroke="#444" stroke-width="0.7"/><rect x="452" y="167" width="4.3" height="17.8" rx="1.5" fill="#3a8cc8"/><circle cx="464" cy="170.9" r="3.9" fill="#3a8cc8"/><rect x="457.7" y="177.6" width="12.6" height="12.8" rx="1.8" fill="#3a93d6"/><path d="M472.3 174 L475.3 185.5" stroke="#666" stroke-width="1.2"/><rect x="469.3" y="168" width="6.5" height="6.5" fill="#e8e000"/><path d="M469.3 168 L475.8 174.5 M475.8 168 L469.3 174.5 M472.55 167.5 L472.55 175 M468.8 171.25 L476.3 171.25" stroke="#444" stroke-width="0.7"/><rect x="452.8" y="217.5" width="4" height="18" rx="1.5" fill="none" stroke="#d2d2d2" stroke-width="1"/><circle cx="463.2" cy="219.5" r="3.4" fill="none" stroke="#d2d2d2" stroke-width="1"/><rect x="458.7" y="226.4" width="10" height="11.8" rx="1.5" fill="none" stroke="#d2d2d2" stroke-width="1"/><path d="M472 222 L475 234" stroke="#d2d2d2" stroke-width="1"/><path d="M469 216 L475 222 M475 216 L469 222 M472 215 L472 223 M468 219 L476 219" stroke="#d2d2d2" stroke-width="0.8"/><path d="M452.3 268.5 L455.5 271.7 M455.5 268.5 L452.3 271.7" stroke="#5060b0" stroke-width="0.8"/><path d="M452.3 272.5 L455.5 275.7 M455.5 272.5 L452.3 275.7" stroke="#5060b0" stroke-width="0.8"/><path d="M458.5 264 L461.7 267.2 M461.7 264 L458.5 267.2" stroke="#d05060" stroke-width="0.8"/><path d="M458.5 273.5 L461.7 276.7 M461.7 273.5 L458.5 276.7" stroke="#3a5a50" stroke-width="0.8"/><path d="M458.5 277.2 L461.7 280.4 M461.7 277.2 L458.5 280.4" stroke="#3a5a50" stroke-width="0.8"/><path d="M458.5 280.9 L461.7 284.09999999999997 M461.7 280.9 L458.5 284.09999999999997" stroke="#3a5a50" stroke-width="0.8"/><path d="M462.2 264 L465.4 267.2 M465.4 264 L462.2 267.2" stroke="#d05060" stroke-width="0.8"/><path d="M462.2 273.5 L465.4 276.7 M465.4 273.5 L462.2 276.7" stroke="#3a5a50" stroke-width="0.8"/><path d="M462.2 277.2 L465.4 280.4 M465.4 277.2 L462.2 280.4" stroke="#3a5a50" stroke-width="0.8"/><path d="M462.2 280.9 L465.4 284.09999999999997 M465.4 280.9 L462.2 284.09999999999997" stroke="#3a5a50" stroke-width="0.8"/><path d="M465.9 264 L469.09999999999997 267.2 M469.09999999999997 264 L465.9 267.2" stroke="#d05060" stroke-width="0.8"/><path d="M465.9 273.5 L469.09999999999997 276.7 M469.09999999999997 273.5 L465.9 276.7" stroke="#3a5a50" stroke-width="0.8"/><path d="M465.9 277.2 L469.09999999999997 280.4 M469.09999999999997 277.2 L465.9 280.4" stroke="#3a5a50" stroke-width="0.8"/><path d="M465.9 280.9 L469.09999999999997 284.09999999999997 M469.09999999999997 280.9 L465.9 284.09999999999997" stroke="#3a5a50" stroke-width="0.8"/><path d="M472 270 L475 281.5" stroke="#666" stroke-width="1.2"/><rect x="469" y="264" width="6.5" height="6.5" fill="#e8e000"/><path d="M469 264 L475.5 270.5 M475.5 264 L469 270.5 M472.25 263.5 L472.25 271 M468.5 267.25 L476 267.25" stroke="#444" stroke-width="0.7"/><circle cx="463" cy="316.5" r="4" fill="#e6e6e6"/><path d="M453 335 Q453 322 463 321 Q473 322 473 335 Z" fill="#e6e6e6"/><path d="M472 318 L475 333" stroke="#dadada" stroke-width="1"/><path d="M469 312 L475 318 M475 312 L469 318" stroke="#dadada" stroke-width="0.8"/><path d="M585.5 143.5 L585.5 156 L588.3 153.3 L590.5 158 L592.3 157.2 L590.2 152.6 L594 152.3 Z" fill="#fff" stroke="#222" stroke-width="0.9" stroke-linejoin="round"/></svg><div class="t" style="left:484.50px;top:125.00px;font-size:11.74px;color:#474747;font-weight:bold;transform:scaleX(0.8115);transform-origin:0 0;">Art to Stitch (Intelligent)</div><div class="t" style="left:484.50px;top:174.00px;font-size:11.59px;color:#474747;font-weight:bold;transform:scaleX(0.8010);transform-origin:0 0;">Art to Stitch (Area only)</div><div class="t" style="left:484.50px;top:223.00px;font-size:11.59px;color:#c4c4c4;font-weight:bold;transform:scaleX(0.7938);transform-origin:0 0;">Art to Stitch (Line only)</div><div class="t" style="left:484.40px;top:269.00px;font-size:11.74px;color:#474747;font-weight:bold;transform:scaleX(0.8040);transform-origin:0 0;">Vector To X-Stitch</div><div class="t" style="left:484.00px;top:319.00px;font-size:11.59px;color:#c8c8c8;font-weight:bold;transform:scaleX(0.8220);transform-origin:0 0;">Image to Photo-Stitch</div>
</body></html>
